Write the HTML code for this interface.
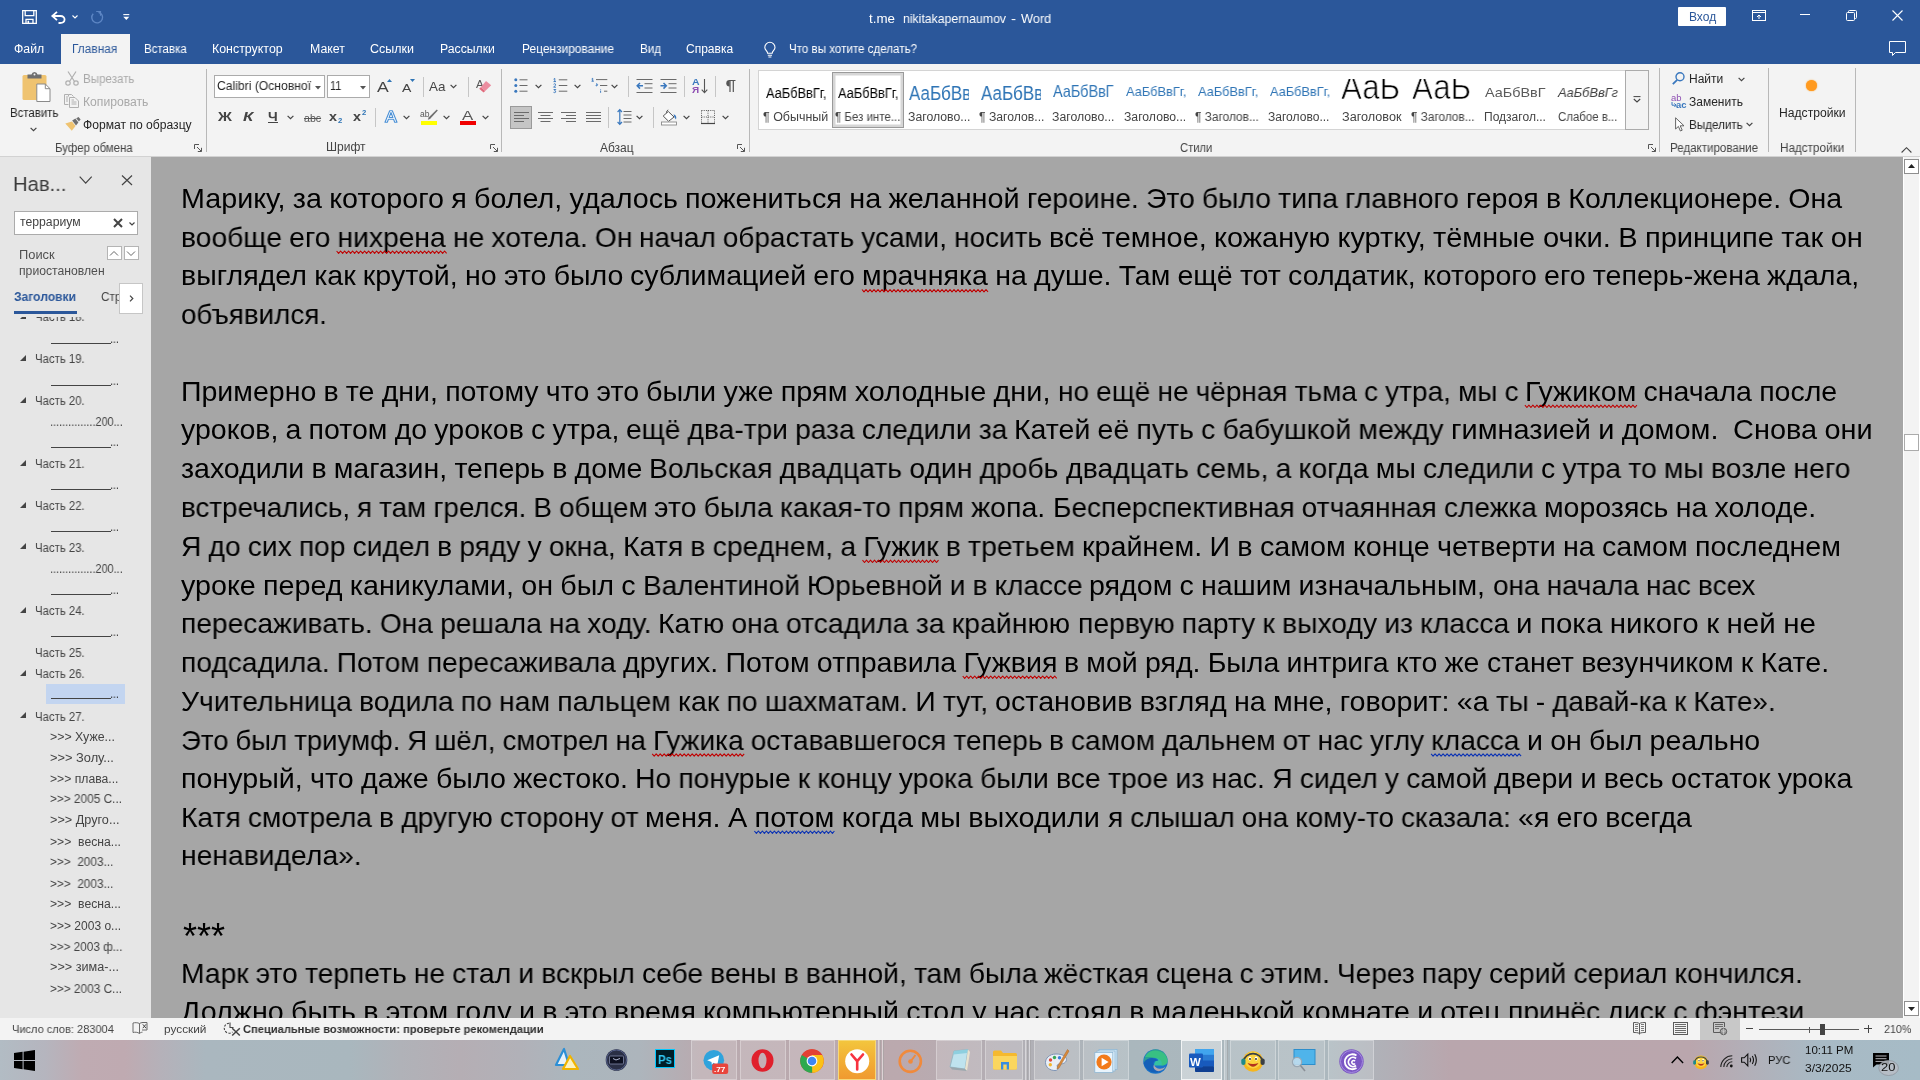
<!DOCTYPE html><html lang="ru"><head><meta charset="utf-8"><title>t.me nikitakapernaumov - Word</title><style>
*{margin:0;padding:0;box-sizing:border-box}
html,body{width:1920px;height:1080px;overflow:hidden;background:#f3f3f3}
body{font-family:"Liberation Sans",sans-serif;position:relative;color:#262626}
.t{position:absolute;white-space:pre;transform-origin:0 0;will-change:transform}
.a{position:absolute}
svg{position:absolute;overflow:visible}
.sep{position:absolute;width:1px;background:#c8c8c8}
.gsep{position:absolute;width:1px;background:#b4b4b4}
</style></head><body><div class="a" style="left:0;top:0;width:1920px;height:64px;background:#2b579a"></div><div class="a" style="left:61px;top:34px;width:69px;height:31px;background:#f3f3f3"></div><div class="a" style="left:0;top:64px;width:1920px;height:92px;background:#f3f3f3"></div><div class="a" style="left:0;top:156px;width:1920px;height:1px;background:#d2d2d2"></div><div class="t " id="t0" style="left:869.09px;top:11.65px;font-size:13px;line-height:13px;color:#ffffff;transform:scaleX(1.0262);">t.me</div><div class="t " id="t1" style="left:902.59px;top:11.65px;font-size:13px;line-height:13px;color:#ffffff;transform:scaleX(0.9444);">nikitakapernaumov</div><div class="t " id="t2" style="left:1010.99px;top:11.65px;font-size:13px;line-height:13px;color:#ffffff;transform:scaleX(1.1649);">-</div><div class="t " id="t3" style="left:1020.99px;top:11.65px;font-size:13px;line-height:13px;color:#ffffff;transform:scaleX(0.9816);">Word</div><div class="a" style="left:1678px;top:7px;width:48px;height:19px;background:#fff;border-radius:1px"></div><div class="t " id="t4" style="left:1688.66px;top:11.49px;font-size:12px;line-height:12px;color:#2b579a;transform:scaleX(0.9920);">Вход</div><div class="t " id="t5" style="left:14.16px;top:43.29px;font-size:12px;line-height:12px;color:#ffffff;transform:scaleX(1.0228);">Файл</div><div class="t " id="t6" style="left:72.16px;top:43.29px;font-size:12px;line-height:12px;color:#2b579a;transform:scaleX(0.9891);">Главная</div><div class="t " id="t7" style="left:143.66px;top:43.29px;font-size:12px;line-height:12px;color:#ffffff;transform:scaleX(0.9570);">Вставка</div><div class="t " id="t8" style="left:212.41px;top:43.29px;font-size:12px;line-height:12px;color:#ffffff;transform:scaleX(1.0331);">Конструктор</div><div class="t " id="t9" style="left:309.66px;top:43.29px;font-size:12px;line-height:12px;color:#ffffff;transform:scaleX(1.0286);">Макет</div><div class="t " id="t10" style="left:370.41px;top:43.29px;font-size:12px;line-height:12px;color:#ffffff;transform:scaleX(1.0400);">Ссылки</div><div class="t " id="t11" style="left:440.36px;top:43.29px;font-size:12px;line-height:12px;color:#ffffff;transform:scaleX(1.0182);">Рассылки</div><div class="t " id="t12" style="left:521.56px;top:43.29px;font-size:12px;line-height:12px;color:#ffffff;transform:scaleX(0.9932);">Рецензирование</div><div class="t " id="t13" style="left:639.56px;top:43.29px;font-size:12px;line-height:12px;color:#ffffff;transform:scaleX(0.9687);">Вид</div><div class="t " id="t14" style="left:686.46px;top:43.29px;font-size:12px;line-height:12px;color:#ffffff;transform:scaleX(0.9992);">Справка</div><div class="t " id="t15" style="left:788.56px;top:43.29px;font-size:12px;line-height:12px;color:#ffffff;transform:scaleX(0.9652);">Что вы хотите сделать?</div><svg style="left:22px;top:10px" width="15" height="14" viewBox="0 0 15 14" fill="none" stroke="#fff" stroke-width="1.3"><path d="M0.7 0.7 H14.3 V13.3 H0.7Z"/><path d="M3.2 0.7 V5.6 H11.8 V0.7"/><path d="M4 13.3 V9.3 H11 V13.3" /><path d="M6.3 10.7 V13" stroke-width="1.6"/></svg><svg style="left:50.5px;top:10.5px" width="15" height="13" viewBox="0 0 15 13" fill="none" stroke="#fff" stroke-width="1.8"><path d="M6 0.8 L1.3 5 L6 9.2"/><path d="M1.5 5 H9.5 C15 5 15 12 9 12 H7.5"/></svg><svg style="left:71.5px;top:14.5px" width="6" height="4" viewBox="0 0 6 4"><path d="M0.5 0.5 L3 3 L5.5 0.5" fill="none" stroke="#fff" stroke-width="1.1"/></svg><svg style="left:90px;top:10.5px" width="14" height="13" viewBox="0 0 14 13" fill="none" stroke="#5d86c4" stroke-width="1.4"><path d="M8.5 1.2 A5.4 5.4 0 1 1 3.2 2.8"/><path d="M6.2 0.5 H10.5 V4.8" stroke-width="1.2"/></svg><svg style="left:122.5px;top:14px" width="7" height="7" viewBox="0 0 7 7"><path d="M0.3 0.6 H6.3" stroke="#fff" stroke-width="1.1"/><path d="M0.3 2.8 H6.3 L3.3 6Z" fill="#fff"/></svg><svg style="left:1752px;top:10px" width="14" height="11" viewBox="0 0 14 11" fill="none" stroke="#fff" stroke-width="1"><rect x="0.5" y="0.5" width="13" height="10"/><path d="M0.5 2.5 H13.5"/><path d="M7 9 V5 M5 7 L7 5 L9 7"/></svg><div class="a" style="left:1800px;top:14px;width:10px;height:1px;background:#fff"></div><svg style="left:1846px;top:10px" width="11" height="11" viewBox="0 0 11 11" fill="none" stroke="#fff" stroke-width="1"><rect x="0.5" y="2.5" width="8" height="8" rx="1"/><path d="M2.5 2.5 V1.5 Q2.5 0.5 3.5 0.5 H9.5 Q10.5 0.5 10.5 1.5 V7.5 Q10.5 8.5 9.5 8.5 H8.5"/></svg><svg style="left:1891.5px;top:9.5px" width="11" height="11" viewBox="0 0 11 11"><path d="M0.5 0.5 L10.5 10.5 M10.5 0.5 L0.5 10.5" stroke="#fff" stroke-width="1.1"/></svg><svg style="left:1889px;top:41px" width="17" height="15" viewBox="0 0 17 15"><path d="M0.5 0.5 H16.5 V11.5 H6.5 L3.5 14.5 V11.5 H0.5Z" fill="none" stroke="#fff" stroke-width="1"/></svg><svg style="left:764px;top:41.5px" width="12" height="16" viewBox="0 0 12 16" fill="none" stroke="#fff" stroke-width="1.1"><path d="M3.6 11.3 C3.6 9 0.8 8.2 0.8 5.4 A5.1 5.1 0 0 1 11 5.4 C11 8.2 8.2 9 8.2 11.3Z"/><path d="M3.8 13.2 H8 M4.4 15 H7.4"/></svg><svg style="left:21.5px;top:72px" width="29" height="30" viewBox="0 0 29 30"><rect x="0.5" y="3" width="24" height="25" rx="1.5" fill="#efc370"/><path d="M5.5 2.5 H9.5 Q10 0 12.5 0 Q15 0 15.5 2.5 H19.5 V6.5 H5.5Z" fill="#6f6f6f"/><circle cx="12.5" cy="2.4" r="1" fill="#f3f3f3"/><path d="M14.8 12 H23.3 L28 16.7 V29.5 H14.8Z" fill="#fff" stroke="#8a8a8a" stroke-width="1"/><path d="M23.3 12 V16.7 H28" fill="none" stroke="#8a8a8a" stroke-width="1"/></svg><div class="t " id="t16" style="left:9.56px;top:107.29px;font-size:12px;line-height:12px;color:#262626;transform:scaleX(0.9521);">Вставить</div><svg style="left:29.8px;top:126.5px" width="7" height="5" viewBox="0 0 7 5"><path d="M0.6 0.8 L3.5 3.7 L6.4 0.8" fill="none" stroke="#444" stroke-width="1.2"/></svg><svg style="left:65px;top:70.5px" width="14" height="15" viewBox="0 0 14 15" fill="none" stroke="#b0b0b0" stroke-width="1.2"><path d="M3 0.5 L9.5 10.5 M11 0.5 L4.5 10.5"/><circle cx="3" cy="12" r="2.2"/><circle cx="11" cy="12" r="2.2"/></svg><div class="t " id="t17" style="left:82.86px;top:72.89px;font-size:12px;line-height:12px;color:#a9a9a9;transform:scaleX(0.9637);">Вырезать</div><svg style="left:64px;top:94px" width="15" height="14" viewBox="0 0 15 14" fill="none" stroke="#b0b0b0" stroke-width="1"><path d="M4.5 2.5 V0.5 H7.5 L9.5 2.5"/><path d="M0.5 0.5 H4.5 M0.5 0.5 V10.5 H4.5"/><path d="M5.5 3.5 H11 L14.5 7 V13.5 H5.5Z"/><path d="M2 3 H4 M2 5 H4 M2 7 H4 M7.5 8 H12.5 M7.5 10 H12.5 M7.5 6 H10"/></svg><div class="t " id="t18" style="left:82.86px;top:96.29px;font-size:12px;line-height:12px;color:#a9a9a9;transform:scaleX(1.0126);">Копировать</div><svg style="left:64.5px;top:117px" width="16" height="14" viewBox="0 0 16 14"><path d="M0.3 6.5 L7 4.5 L10.5 9 L6.8 13.7Z" fill="#efc370"/><path d="M7.2 3.6 L10.4 1.6 L13.4 5.6 L11 8.5Z" fill="#6f6f6f"/><path d="M11.2 1.2 L13.6 0 L15.6 2.6 L13.9 4.6Z" fill="#6f6f6f"/></svg><div class="t " id="t19" style="left:82.86px;top:118.79px;font-size:12px;line-height:12px;color:#262626;transform:scaleX(1.0096);">Формат по образцу</div><div class="t " id="t20" style="left:55.46px;top:141.79px;font-size:12px;line-height:12px;color:#444444;transform:scaleX(0.9533);">Буфер обмена</div><svg style="left:193.6px;top:144.0px" width="8" height="8" viewBox="0 0 8 8" fill="none" stroke="#555" stroke-width="1"><path d="M0.5 5 V0.5 H5"/><path d="M3 3 L7.3 7.3 M7.5 3.8 V7.5 H3.8"/></svg><div class="a" style="left:205.5px;top:68.5px;width:1px;height:83.0px;background:#b8b8b8"></div><div class="a" style="left:214px;top:75px;width:111px;height:23px;background:#fff;border:1px solid #ababab"></div><div class="t " id="t21" style="left:216.62px;top:80.47px;font-size:12.5px;line-height:12.5px;color:#262626;transform:scaleX(0.9705);">Calibri (Основної</div><svg style="left:315px;top:85.5px" width="6" height="3.5" viewBox="0 0 6 3.5"><path d="M0 0 H6 L3 3.5Z" fill="#555"/></svg><div class="a" style="left:327px;top:75px;width:43px;height:23px;background:#fff;border:1px solid #ababab"></div><div class="t " id="t22" style="left:329.93px;top:80.47px;font-size:12.5px;line-height:12.5px;color:#262626;transform:scaleX(0.8703);">11</div><svg style="left:359.5px;top:85.5px" width="6" height="3.5" viewBox="0 0 6 3.5"><path d="M0 0 H6 L3 3.5Z" fill="#555"/></svg><div class="t " id="t23" style="left:377.19px;top:80.18px;font-size:14.5px;line-height:14.5px;color:#444;transform:scaleX(1.2138);">A</div><svg style="left:387px;top:79px" width="5" height="3" viewBox="0 0 5 3"><path d="M0 3 L2.5 0 L5 3Z" fill="#2e74b5"/></svg><div class="t " id="t24" style="left:402.19px;top:82.72px;font-size:11.5px;line-height:11.5px;color:#444;transform:scaleX(1.2226);">A</div><svg style="left:410px;top:79px" width="5" height="3" viewBox="0 0 5 3"><path d="M0 0 L2.5 3 L5 0Z" fill="#2e74b5"/></svg><div class="a" style="left:422.5px;top:76.5px;width:1px;height:20.5px;background:#c6c6c6"></div><div class="t " id="t25" style="left:429.09px;top:79.95px;font-size:13px;line-height:13px;color:#444;transform:scaleX(1.0285);">Aa</div><svg style="left:449.9px;top:84.3px" width="7" height="5" viewBox="0 0 7 5"><path d="M0.6 0.8 L3.5 3.7 L6.4 0.8" fill="none" stroke="#444" stroke-width="1.2"/></svg><div class="a" style="left:467.5px;top:76.5px;width:1px;height:20.5px;background:#c6c6c6"></div><div class="t " id="t26" style="left:475.80px;top:79.98px;font-size:10px;line-height:10px;color:#555;transform:scaleX(1.1541);">A</div><svg style="left:478px;top:80px" width="14" height="13" viewBox="0 0 14 13"><path d="M8 1 L13.2 5.2 L7.2 11 L2.8 7.2Z" fill="#ec8ea0"/><path d="M2.8 7.2 L7.2 11 L5.6 12.6 L1.2 8.8Z" fill="#e06a7c"/></svg><div class="t " id="t27" style="left:217.93px;top:111.07px;font-size:12.5px;line-height:12.5px;color:#444;font-weight:700;transform:scaleX(1.2287);">Ж</div><div class="t " id="t28" style="left:242.93px;top:111.07px;font-size:12.5px;line-height:12.5px;color:#444;font-weight:700;font-style:italic;transform:scaleX(1.3398);">К</div><div class="t " id="t29" style="left:267.93px;top:111.07px;font-size:12.5px;line-height:12.5px;color:#444;font-weight:700;transform:scaleX(1.1027);">Ч</div><div class="a" style="left:268px;top:122.3px;width:10px;height:1px;background:#444"></div><svg style="left:286.5px;top:115.3px" width="7" height="5" viewBox="0 0 7 5"><path d="M0.6 0.8 L3.5 3.7 L6.4 0.8" fill="none" stroke="#444" stroke-width="1.2"/></svg><div class="t " id="t30" style="left:303.76px;top:112.56px;font-size:10.5px;line-height:10.5px;color:#555;transform:scaleX(1.0072);text-decoration:line-through;">abc</div><div class="t " id="t31" style="left:329.12px;top:111.07px;font-size:12.5px;line-height:12.5px;color:#444;font-weight:700;transform:scaleX(1.1506);">x</div><div class="t " id="t32" style="left:338.05px;top:118.45px;font-size:6.5px;line-height:6.5px;color:#2e74b5;font-weight:700;transform:scaleX(1.1807);">2</div><div class="t " id="t33" style="left:352.52px;top:111.07px;font-size:12.5px;line-height:12.5px;color:#444;font-weight:700;transform:scaleX(1.1506);">x</div><div class="t " id="t34" style="left:361.55px;top:109.95px;font-size:6.5px;line-height:6.5px;color:#2e74b5;font-weight:700;transform:scaleX(1.1807);">2</div><div class="a" style="left:375.3px;top:107.8px;width:1px;height:19.5px;background:#c6c6c6"></div><svg style="left:384px;top:110px" width="14" height="13" viewBox="0 0 14 13"><path d="M1 12.3 L5.7 0.7 H8.3 L13 12.3 H10.7 L9.6 9.3 H4.4 L3.3 12.3Z M5.1 7.5 H8.9 L7 2.5Z" fill="#fff" stroke="#4a90d6" stroke-width="1.1" stroke-linejoin="round"/></svg><svg style="left:403.0px;top:115.3px" width="7" height="5" viewBox="0 0 7 5"><path d="M0.6 0.8 L3.5 3.7 L6.4 0.8" fill="none" stroke="#444" stroke-width="1.2"/></svg><div class="t " id="t35" style="left:420.40px;top:109.75px;font-size:8.5px;line-height:8.5px;color:#555;transform:scaleX(1.0054);">ab</div><svg style="left:426px;top:109px" width="12" height="12" viewBox="0 0 12 12"><path d="M10.8 0.6 L11.8 1.6 L4 10 L1.8 10.8 L2.6 8.6Z" fill="#6f6f6f"/></svg><div class="a" style="left:421px;top:121px;width:16px;height:4px;background:#ffff00"></div><svg style="left:442.9px;top:115.3px" width="7" height="5" viewBox="0 0 7 5"><path d="M0.6 0.8 L3.5 3.7 L6.4 0.8" fill="none" stroke="#444" stroke-width="1.2"/></svg><div class="t " id="t36" style="left:462.25px;top:109.32px;font-size:13.5px;line-height:13.5px;color:#555;transform:scaleX(1.2445);">A</div><div class="a" style="left:460px;top:121px;width:16px;height:4px;background:#f00000"></div><svg style="left:482.0px;top:115.3px" width="7" height="5" viewBox="0 0 7 5"><path d="M0.6 0.8 L3.5 3.7 L6.4 0.8" fill="none" stroke="#444" stroke-width="1.2"/></svg><div class="t " id="t37" style="left:326.06px;top:141.09px;font-size:12px;line-height:12px;color:#444444;transform:scaleX(1.0014);">Шрифт</div><svg style="left:490.0px;top:144.0px" width="8" height="8" viewBox="0 0 8 8" fill="none" stroke="#555" stroke-width="1"><path d="M0.5 5 V0.5 H5"/><path d="M3 3 L7.3 7.3 M7.5 3.8 V7.5 H3.8"/></svg><div class="a" style="left:501.4px;top:68.5px;width:1px;height:83.0px;background:#b8b8b8"></div><svg style="left:513.5px;top:78px" width="14" height="15" viewBox="0 0 14 15"><circle cx="1.8" cy="1.8" r="1.5" fill="#3a78be"/><circle cx="1.8" cy="7.5" r="1.5" fill="#3a78be"/><circle cx="1.8" cy="13.2" r="1.5" fill="#3a78be"/><path d="M5.5 1.8 H13.5 M5.5 7.5 H13.5 M5.5 13.2 H13.5" stroke="#6a6a6a" stroke-width="1"/></svg><svg style="left:534.8px;top:83.8px" width="7" height="5" viewBox="0 0 7 5"><path d="M0.6 0.8 L3.5 3.7 L6.4 0.8" fill="none" stroke="#444" stroke-width="1.2"/></svg><svg style="left:552.5px;top:78px" width="15" height="15" viewBox="0 0 15 15"><path d="M5.8 1.8 H14.3 M5.8 7.5 H14.3 M5.8 13.2 H14.3" stroke="#6a6a6a" stroke-width="1"/><path d="M0.6 1.2 L1.8 0.4 V3.6 M0.5 3.6 H3 M0.6 6.3 Q1.8 5.2 2.6 6.2 Q3 7.2 0.6 9.2 H3 M0.6 11.5 H2.8 L1.6 12.8 Q3.2 13 2.6 14.2 Q1.8 15 0.5 14.3" fill="none" stroke="#3a78be" stroke-width="0.95"/></svg><svg style="left:574.0px;top:83.8px" width="7" height="5" viewBox="0 0 7 5"><path d="M0.6 0.8 L3.5 3.7 L6.4 0.8" fill="none" stroke="#444" stroke-width="1.2"/></svg><svg style="left:590.5px;top:78px" width="17" height="15" viewBox="0 0 17 15"><path d="M5 1.6 H16.3 M9 7.5 H16.3 M13 13.2 H16.3" stroke="#6a6a6a" stroke-width="1"/><path d="M0.6 1 L1.7 0.3 V3.2 M0.5 3.2 H2.8 M5 6 Q6.4 5.4 6.6 6.6 Q6.6 7.8 5.2 8 Q4.6 7 5.8 6.6 M9.6 11 V11.6 M9.6 12.6 V14.8" fill="none" stroke="#3a78be" stroke-width="0.95"/></svg><svg style="left:610.9px;top:83.8px" width="7" height="5" viewBox="0 0 7 5"><path d="M0.6 0.8 L3.5 3.7 L6.4 0.8" fill="none" stroke="#444" stroke-width="1.2"/></svg><div class="a" style="left:628.4px;top:76.0px;width:1px;height:20.5px;background:#c6c6c6"></div><svg style="left:635.5px;top:78.5px" width="17" height="14" viewBox="0 0 17 14"><path d="M0.5 0.5 H16.5 M8.5 4.7 H16.5 M8.5 9 H16.5 M0.5 13.5 H16.5" stroke="#6a6a6a" stroke-width="1"/><path d="M7 6.8 H1.5 M4 4 L1.2 6.8 L4 9.6" fill="none" stroke="#3a78be" stroke-width="1.5"/></svg><svg style="left:659.5px;top:78.5px" width="17" height="14" viewBox="0 0 17 14"><path d="M0.5 0.5 H16.5 M8.5 4.7 H16.5 M8.5 9 H16.5 M0.5 13.5 H16.5" stroke="#6a6a6a" stroke-width="1"/><path d="M0.5 6.8 H6 M3.5 4 L6.3 6.8 L3.5 9.6" fill="none" stroke="#3a78be" stroke-width="1.5"/></svg><div class="a" style="left:683.5px;top:76.0px;width:1px;height:20.5px;background:#c6c6c6"></div><div class="t " id="t38" style="left:692.34px;top:77.41px;font-size:9.5px;line-height:9.5px;color:#3a78be;font-weight:700;transform:scaleX(1.1113);">A</div><div class="t " id="t39" style="left:692.34px;top:85.41px;font-size:9.5px;line-height:9.5px;color:#8e4fb3;font-weight:700;transform:scaleX(1.0457);">Я</div><svg style="left:700.5px;top:78.5px" width="7" height="15" viewBox="0 0 7 15"><path d="M3.5 0 V13.5 M0.7 10.7 L3.5 13.7 L6.3 10.7" fill="none" stroke="#555" stroke-width="1.1"/></svg><div class="a" style="left:714.6px;top:76.0px;width:1px;height:20.5px;background:#c6c6c6"></div><svg style="left:724.5px;top:80px" width="11" height="12" viewBox="0 0 11 12"><path d="M4.6 0 A3.3 3.3 0 0 0 4.6 6.6 Z" fill="#555"/><path d="M4 0.5 H10.5 M5 0.5 V12 M8.3 0.5 V12" stroke="#555" stroke-width="1.2" fill="none"/></svg><div class="a" style="left:510px;top:106px;width:22px;height:23px;background:#c5c5c5;border:1px solid #9a9a9a"></div><svg style="left:513.5px;top:112.0px" width="15" height="11" viewBox="0 0 15 11"><path d="M0.0 0.5 H15.0 M0.0 3.5 H10.0 M0.0 6.5 H15.0 M0.0 9.5 H10.0" stroke="#6a6a6a" stroke-width="1"/></svg><svg style="left:537.7px;top:112.0px" width="15" height="11" viewBox="0 0 15 11"><path d="M0.0 0.5 H15.0 M2.5 3.5 H12.5 M0.0 6.5 H15.0 M2.5 9.5 H12.5" stroke="#6a6a6a" stroke-width="1"/></svg><svg style="left:561.3px;top:112.0px" width="15" height="11" viewBox="0 0 15 11"><path d="M0.0 0.5 H15.0 M5.0 3.5 H15.0 M0.0 6.5 H15.0 M5.0 9.5 H15.0" stroke="#6a6a6a" stroke-width="1"/></svg><svg style="left:585.5px;top:112.0px" width="15" height="11" viewBox="0 0 15 11"><path d="M0.0 0.5 H15.0 M0.0 3.5 H15.0 M0.0 6.5 H15.0 M0.0 9.5 H15.0" stroke="#6a6a6a" stroke-width="1"/></svg><div class="a" style="left:608.3px;top:107.0px;width:1px;height:20.6px;background:#c6c6c6"></div><svg style="left:616.5px;top:109px" width="15" height="16" viewBox="0 0 15 16"><path d="M6.5 2.5 H14.5 M6.5 6 H14.5 M6.5 9.5 H14.5 M6.5 13 H14.5" stroke="#6a6a6a" stroke-width="1"/><path d="M2.8 0.8 V15.2 M0.6 3 L2.8 0.7 L5 3 M0.6 13 L2.8 15.3 L5 13" fill="none" stroke="#3a78be" stroke-width="1.2"/></svg><svg style="left:636.0px;top:115.3px" width="7" height="5" viewBox="0 0 7 5"><path d="M0.6 0.8 L3.5 3.7 L6.4 0.8" fill="none" stroke="#444" stroke-width="1.2"/></svg><div class="a" style="left:653.4px;top:107.0px;width:1px;height:20.6px;background:#c6c6c6"></div><svg style="left:661px;top:108.5px" width="17" height="17" viewBox="0 0 17 17"><path d="M7.2 0.8 Q5.2 1.5 5.6 4.5" fill="none" stroke="#555" stroke-width="1"/><path d="M7.3 2.5 L13 8 L7.6 12.3 L2.2 7Z" fill="#fff" stroke="#555" stroke-width="1"/><path d="M12.5 5.2 Q16.2 6 15 10.4 Q13.3 8.6 13.2 7.5Z" fill="#3a78be"/><rect x="0.5" y="13" width="15" height="3" fill="#fff" stroke="#8a8a8a" stroke-width="0.9"/></svg><svg style="left:683.1px;top:115.3px" width="7" height="5" viewBox="0 0 7 5"><path d="M0.6 0.8 L3.5 3.7 L6.4 0.8" fill="none" stroke="#444" stroke-width="1.2"/></svg><svg style="left:700.5px;top:110px" width="14" height="14" viewBox="0 0 14 14" fill="none" stroke="#555" stroke-width="1"><path d="M0.5 0.5 H13.5 M0.5 0.5 V13.5 M13.5 0.5 V13.5 M7 0.5 V13.5 M0.5 7 H13.5" stroke-dasharray="1 1.2"/><path d="M0 13.5 H14" stroke="#444" stroke-width="1.2"/></svg><svg style="left:722.0px;top:115.3px" width="7" height="5" viewBox="0 0 7 5"><path d="M0.6 0.8 L3.5 3.7 L6.4 0.8" fill="none" stroke="#444" stroke-width="1.2"/></svg><div class="t " id="t40" style="left:600.46px;top:141.59px;font-size:12px;line-height:12px;color:#444444;transform:scaleX(0.9961);">Абзац</div><svg style="left:737.0px;top:144.0px" width="8" height="8" viewBox="0 0 8 8" fill="none" stroke="#555" stroke-width="1"><path d="M0.5 5 V0.5 H5"/><path d="M3 3 L7.3 7.3 M7.5 3.8 V7.5 H3.8"/></svg><div class="a" style="left:748.5px;top:68.5px;width:1px;height:83.0px;background:#b8b8b8"></div><div class="a" style="left:758px;top:70px;width:868px;height:60px;background:#fff;border:1px solid #d4d4d4"></div><div class="a" style="left:832px;top:72px;width:72px;height:56px;background:#fff;border:1px solid #9a9a9a;box-shadow:inset 0 0 0 2.5px #d6d6d6"></div><div class="t " id="t41" style="left:765.82px;top:85.80px;font-size:14px;line-height:14px;color:#000;transform:scaleX(0.9144);">АаБбВвГг,</div><div class="t " id="t42" style="left:837.82px;top:85.80px;font-size:14px;line-height:14px;color:#000;transform:scaleX(0.9144);">АаБбВвГг,</div><div class="a" style="left:905px;top:74px;width:64.2px;height:50px;overflow:hidden"><div class="t " id="t43" style="left:4.30px;top:8.72px;font-size:20px;line-height:20px;color:#2e74b5;transform:scaleX(0.8494);">АаБбВвГ</div></div><div class="a" style="left:977px;top:74px;width:64.2px;height:50px;overflow:hidden"><div class="t " id="t44" style="left:4.30px;top:8.72px;font-size:20px;line-height:20px;color:#2e74b5;transform:scaleX(0.8494);">АаБбВвГ</div></div><div class="t " id="t45" style="left:1053.27px;top:83.44px;font-size:16.2px;line-height:16.2px;color:#2e74b5;transform:scaleX(0.8897);">АаБбВвГ</div><div class="t " id="t46" style="left:1125.86px;top:85.42px;font-size:13.5px;line-height:13.5px;color:#2e74b5;transform:scaleX(0.9473);">АаБбВвГг,</div><div class="t " id="t47" style="left:1197.76px;top:85.42px;font-size:13.5px;line-height:13.5px;color:#2e74b5;transform:scaleX(0.9457);">АаБбВвГг,</div><div class="t " id="t48" style="left:1269.76px;top:85.42px;font-size:13.5px;line-height:13.5px;color:#2e74b5;transform:scaleX(0.9442);">АаБбВвГг,</div><div class="a" style="left:1337px;top:78.6px;width:71px;height:28px;overflow:hidden"><div class="t " id="t49" style="left:3.58px;top:-8.15px;font-size:34.5px;line-height:34.5px;color:#000;transform:scaleX(0.9066);-webkit-text-stroke:0.7px #fff;">АаБ</div></div><div class="a" style="left:1409px;top:78.6px;width:71px;height:28px;overflow:hidden"><div class="t " id="t50" style="left:3.38px;top:-8.15px;font-size:34.5px;line-height:34.5px;color:#000;transform:scaleX(0.9066);-webkit-text-stroke:0.7px #fff;">АаБ</div></div><div class="t " id="t51" style="left:1485.49px;top:86.25px;font-size:13px;line-height:13px;color:#5a5a5a;transform:scaleX(1.1083);">АаБбВвГ</div><div class="t " id="t52" style="left:1557.65px;top:85.82px;font-size:13.5px;line-height:13.5px;color:#404040;font-style:italic;transform:scaleX(0.9534);">АаБбВвГг</div><div class="t " id="t53" style="left:762.96px;top:111.29px;font-size:12px;line-height:12px;color:#444;transform:scaleX(1.0384);">¶ Обычный</div><div class="t " id="t54" style="left:834.66px;top:111.29px;font-size:12px;line-height:12px;color:#444;transform:scaleX(0.9584);">¶ Без инте...</div><div class="t " id="t55" style="left:908.16px;top:111.29px;font-size:12px;line-height:12px;color:#444;transform:scaleX(1.0207);">Заголово...</div><div class="t " id="t56" style="left:979.16px;top:111.29px;font-size:12px;line-height:12px;color:#444;transform:scaleX(1.0158);">¶ Заголов...</div><div class="t " id="t57" style="left:1052.16px;top:111.29px;font-size:12px;line-height:12px;color:#444;transform:scaleX(1.0207);">Заголово...</div><div class="t " id="t58" style="left:1123.96px;top:111.29px;font-size:12px;line-height:12px;color:#444;transform:scaleX(1.0175);">Заголово...</div><div class="t " id="t59" style="left:1195.16px;top:111.29px;font-size:12px;line-height:12px;color:#444;transform:scaleX(0.9910);">¶ Заголов...</div><div class="t " id="t60" style="left:1268.16px;top:111.29px;font-size:12px;line-height:12px;color:#444;transform:scaleX(1.0044);">Заголово...</div><div class="t " id="t61" style="left:1342.16px;top:111.29px;font-size:12px;line-height:12px;color:#444;transform:scaleX(1.0535);">Заголовок</div><div class="t " id="t62" style="left:1410.96px;top:111.29px;font-size:12px;line-height:12px;color:#444;transform:scaleX(0.9879);">¶ Заголов...</div><div class="t " id="t63" style="left:1484.16px;top:111.29px;font-size:12px;line-height:12px;color:#444;transform:scaleX(1.0031);">Подзагол...</div><div class="t " id="t64" style="left:1557.76px;top:111.29px;font-size:12px;line-height:12px;color:#444;transform:scaleX(0.9528);">Слабое в...</div><div class="a" style="left:1625px;top:70px;width:24px;height:60px;background:#f3f3f3;border:1px solid #ababab"></div><svg style="left:1633px;top:95.5px" width="8" height="7" viewBox="0 0 8 7"><path d="M0.5 0.6 H7.5" stroke="#444" stroke-width="1"/><path d="M0.8 3 L4 6 L7.2 3" fill="none" stroke="#444" stroke-width="1.1"/></svg><div class="t " id="t65" style="left:1179.76px;top:141.79px;font-size:12px;line-height:12px;color:#444444;transform:scaleX(0.9353);">Стили</div><svg style="left:1648.0px;top:144.0px" width="8" height="8" viewBox="0 0 8 8" fill="none" stroke="#555" stroke-width="1"><path d="M0.5 5 V0.5 H5"/><path d="M3 3 L7.3 7.3 M7.5 3.8 V7.5 H3.8"/></svg><div class="a" style="left:1659.4px;top:67.5px;width:1px;height:84.5px;background:#b8b8b8"></div><svg style="left:1672px;top:72px" width="13" height="13" viewBox="0 0 13 13" fill="none"><circle cx="8" cy="4.8" r="4" stroke="#3a78be" stroke-width="1.4"/><path d="M5.2 7.8 L0.8 12.2" stroke="#3a78be" stroke-width="1.8"/></svg><div class="t " id="t66" style="left:1689.46px;top:73.09px;font-size:12px;line-height:12px;color:#262626;transform:scaleX(0.9968);">Найти</div><svg style="left:1738.4px;top:77.3px" width="7" height="5" viewBox="0 0 7 5"><path d="M0.6 0.8 L3.5 3.7 L6.4 0.8" fill="none" stroke="#444" stroke-width="1.2"/></svg><div class="t " id="t67" style="left:1670.90px;top:93.75px;font-size:8.5px;line-height:8.5px;color:#8e4fb3;transform:scaleX(1.1110);">ab</div><div class="t " id="t68" style="left:1676.40px;top:101.05px;font-size:8.5px;line-height:8.5px;color:#3a78be;font-weight:700;transform:scaleX(1.1110);">ac</div><svg style="left:1670.5px;top:102px" width="6" height="6" viewBox="0 0 6 6"><path d="M1 0 V3.2 H5 M3.4 1.4 L5.2 3.2 L3.4 5" fill="none" stroke="#3a78be" stroke-width="1"/></svg><div class="t " id="t69" style="left:1689.46px;top:96.49px;font-size:12px;line-height:12px;color:#262626;transform:scaleX(0.9963);">Заменить</div><svg style="left:1675px;top:116.5px" width="10" height="15" viewBox="0 0 10 15"><path d="M0.6 0.8 V12 L3.4 9.4 L5.4 14 L7.2 13.2 L5.2 8.8 H9Z" fill="#fff" stroke="#555" stroke-width="0.9" stroke-linejoin="round"/></svg><div class="t " id="t70" style="left:1689.46px;top:118.69px;font-size:12px;line-height:12px;color:#262626;transform:scaleX(0.9707);">Выделить</div><svg style="left:1745.9px;top:122.3px" width="7" height="5" viewBox="0 0 7 5"><path d="M0.6 0.8 L3.5 3.7 L6.4 0.8" fill="none" stroke="#444" stroke-width="1.2"/></svg><div class="t " id="t71" style="left:1669.56px;top:141.69px;font-size:12px;line-height:12px;color:#444444;transform:scaleX(0.9630);">Редактирование</div><div class="a" style="left:1768.3px;top:67.5px;width:1px;height:84.5px;background:#b8b8b8"></div><div class="a" style="left:1805.5px;top:79.5px;width:11px;height:11px;border-radius:50%;background:#ff9a1f;box-shadow:0 0 1.5px #ff9a1f"></div><div class="t " id="t72" style="left:1778.56px;top:106.99px;font-size:12px;line-height:12px;color:#262626;transform:scaleX(1.0106);">Надстройки</div><div class="t " id="t73" style="left:1779.66px;top:141.69px;font-size:12px;line-height:12px;color:#444444;transform:scaleX(0.9756);">Надстройки</div><div class="a" style="left:1855.0px;top:67.5px;width:1px;height:84.5px;background:#b8b8b8"></div><svg style="left:1901px;top:146.5px" width="11" height="6" viewBox="0 0 11 6"><path d="M0.6 5.5 L5.5 0.7 L10.4 5.5" fill="none" stroke="#444" stroke-width="1.1"/></svg><div class="a" style="left:0;top:157px;width:151px;height:861px;background:#e6e6e6"></div><div class="t " id="t74" style="left:13.06px;top:173.60px;font-size:20.5px;line-height:20.5px;color:#3b3b3b;transform:scaleX(0.9866);">Нав...</div><svg style="left:79px;top:176px" width="14" height="9" viewBox="0 0 14 9"><path d="M0.7 0.7 L6.7 7.2 L12.7 0.7" fill="none" stroke="#444" stroke-width="1.2"/></svg><svg style="left:121px;top:175px" width="12" height="11" viewBox="0 0 12 11"><path d="M1 0.5 L11 10 M11 0.5 L1 10" fill="none" stroke="#444" stroke-width="1.2"/></svg><div class="a" style="left:14px;top:211px;width:124px;height:24px;background:#fff;border:1px solid #ababab"></div><div class="t " id="t75" style="left:20.46px;top:216.49px;font-size:12px;line-height:12px;color:#444;transform:scaleX(1.0181);">террариум</div><svg style="left:113px;top:218px" width="10" height="10" viewBox="0 0 10 10"><path d="M1 1 L9 9 M9 1 L1 9" fill="none" stroke="#444" stroke-width="2"/></svg><svg style="left:129px;top:221.5px" width="6" height="4" viewBox="0 0 6 4"><path d="M0.5 0.5 L3 3 L5.5 0.5" fill="none" stroke="#444" stroke-width="1.2"/></svg><div class="t " id="t76" style="left:18.66px;top:249.49px;font-size:12px;line-height:12px;color:#505050;transform:scaleX(1.0714);">Поиск</div><div class="t " id="t77" style="left:18.66px;top:265.29px;font-size:12px;line-height:12px;color:#505050;transform:scaleX(1.0159);">приостановлен</div><div class="a" style="left:107px;top:246px;width:15px;height:14px;background:#fff;border:1px solid #b4b4b4"></div><svg style="left:109px;top:249.5px" width="10" height="7" viewBox="0 0 10 7"><path d="M1 5.5 L5 1.5 L9 5.5" fill="none" stroke="#666" stroke-width="1"/></svg><div class="a" style="left:124px;top:246px;width:15px;height:14px;background:#fff;border:1px solid #b4b4b4"></div><svg style="left:126px;top:249.5px" width="10" height="7" viewBox="0 0 10 7"><path d="M1 1.5 L5 5.5 L9 1.5" fill="none" stroke="#666" stroke-width="1"/></svg><div class="t " id="t78" style="left:14.12px;top:291.07px;font-size:12.5px;line-height:12.5px;color:#2b579a;font-weight:700;transform:scaleX(0.9659);">Заголовки</div><div class="a" style="left:14px;top:311px;width:63px;height:3px;background:#2b579a"></div><div class="t " id="t79" style="left:101.12px;top:291.07px;font-size:12.5px;line-height:12.5px;color:#444;transform:scaleX(0.9439);">Стр</div><div class="a" style="left:119px;top:283px;width:24px;height:31px;background:#fff;border:1px solid #c6c6c6"></div><svg style="left:128.5px;top:294.5px" width="5" height="7" viewBox="0 0 5 7"><path d="M1 0.7 L3.8 3.5 L1 6.3" fill="none" stroke="#444" stroke-width="1.2"/></svg><div class="a" style="left:0;top:317px;width:150px;height:701px;overflow:hidden"><div class="t " id="t80" style="left:34.66px;top:-5.71px;font-size:12px;line-height:12px;color:#444;transform:scaleX(0.9467);">Часть 18.</div><svg style="left:19.5px;top:-4.5px" width="6" height="6" viewBox="0 0 6 6"><path d="M6 0 L6 6 L0 6Z" fill="#444"/></svg><div class="a" style="left:51.2px;top:25.8px;width:59.5px;height:1px;background:#444"></div><div class="t " id="t81" style="left:110.36px;top:15.59px;font-size:12px;line-height:12px;color:#333;transform:scaleX(0.8926);">...</div><div class="t " id="t82" style="left:34.66px;top:36.29px;font-size:12px;line-height:12px;color:#444;transform:scaleX(0.9467);">Часть 19.</div><svg style="left:19.5px;top:37.5px" width="6" height="6" viewBox="0 0 6 6"><path d="M6 0 L6 6 L0 6Z" fill="#444"/></svg><div class="a" style="left:51.2px;top:67.8px;width:59.5px;height:1px;background:#444"></div><div class="t " id="t83" style="left:110.36px;top:57.59px;font-size:12px;line-height:12px;color:#333;transform:scaleX(0.8926);">...</div><div class="t " id="t84" style="left:34.66px;top:78.29px;font-size:12px;line-height:12px;color:#444;transform:scaleX(0.9467);">Часть 20.</div><svg style="left:19.5px;top:79.5px" width="6" height="6" viewBox="0 0 6 6"><path d="M6 0 L6 6 L0 6Z" fill="#444"/></svg><div class="t " id="t85" style="left:50.36px;top:98.79px;font-size:12px;line-height:12px;color:#444;transform:scaleX(0.9087);">...............200...</div><div class="a" style="left:51.2px;top:129.5px;width:59.5px;height:1px;background:#444"></div><div class="t " id="t86" style="left:110.36px;top:119.29px;font-size:12px;line-height:12px;color:#333;transform:scaleX(0.8926);">...</div><div class="t " id="t87" style="left:34.66px;top:141.29px;font-size:12px;line-height:12px;color:#444;transform:scaleX(0.9467);">Часть 21.</div><svg style="left:19.5px;top:142.5px" width="6" height="6" viewBox="0 0 6 6"><path d="M6 0 L6 6 L0 6Z" fill="#444"/></svg><div class="a" style="left:51.2px;top:172.0px;width:59.5px;height:1px;background:#444"></div><div class="t " id="t88" style="left:110.36px;top:161.79px;font-size:12px;line-height:12px;color:#333;transform:scaleX(0.8926);">...</div><div class="t " id="t89" style="left:34.66px;top:183.29px;font-size:12px;line-height:12px;color:#444;transform:scaleX(0.9467);">Часть 22.</div><svg style="left:19.5px;top:184.5px" width="6" height="6" viewBox="0 0 6 6"><path d="M6 0 L6 6 L0 6Z" fill="#444"/></svg><div class="a" style="left:51.2px;top:213.8px;width:59.5px;height:1px;background:#444"></div><div class="t " id="t90" style="left:110.36px;top:203.59px;font-size:12px;line-height:12px;color:#333;transform:scaleX(0.8926);">...</div><div class="t " id="t91" style="left:34.66px;top:225.09px;font-size:12px;line-height:12px;color:#444;transform:scaleX(0.9467);">Часть 23.</div><svg style="left:19.5px;top:226.3px" width="6" height="6" viewBox="0 0 6 6"><path d="M6 0 L6 6 L0 6Z" fill="#444"/></svg><div class="t " id="t92" style="left:50.36px;top:246.29px;font-size:12px;line-height:12px;color:#444;transform:scaleX(0.9087);">...............200...</div><div class="a" style="left:51.2px;top:277.0px;width:59.5px;height:1px;background:#444"></div><div class="t " id="t93" style="left:110.36px;top:266.79px;font-size:12px;line-height:12px;color:#333;transform:scaleX(0.8926);">...</div><div class="t " id="t94" style="left:34.66px;top:288.29px;font-size:12px;line-height:12px;color:#444;transform:scaleX(0.9467);">Часть 24.</div><svg style="left:19.5px;top:289.5px" width="6" height="6" viewBox="0 0 6 6"><path d="M6 0 L6 6 L0 6Z" fill="#444"/></svg><div class="a" style="left:51.2px;top:319.0px;width:59.5px;height:1px;background:#444"></div><div class="t " id="t95" style="left:110.36px;top:308.79px;font-size:12px;line-height:12px;color:#333;transform:scaleX(0.8926);">...</div><div class="t " id="t96" style="left:34.66px;top:330.29px;font-size:12px;line-height:12px;color:#444;transform:scaleX(0.9467);">Часть 25.</div><div class="t " id="t97" style="left:34.66px;top:351.29px;font-size:12px;line-height:12px;color:#444;transform:scaleX(0.9467);">Часть 26.</div><svg style="left:19.5px;top:352.5px" width="6" height="6" viewBox="0 0 6 6"><path d="M6 0 L6 6 L0 6Z" fill="#444"/></svg><div class="a" style="left:46px;top:367.0px;width:79px;height:20px;background:#c3d5f0"></div><div class="a" style="left:51.2px;top:381.0px;width:59.5px;height:1px;background:#444"></div><div class="t " id="t98" style="left:110.36px;top:370.79px;font-size:12px;line-height:12px;color:#333;transform:scaleX(0.8926);">...</div><div class="t " id="t99" style="left:34.66px;top:393.59px;font-size:12px;line-height:12px;color:#444;transform:scaleX(0.9467);">Часть 27.</div><svg style="left:19.5px;top:394.8px" width="6" height="6" viewBox="0 0 6 6"><path d="M6 0 L6 6 L0 6Z" fill="#444"/></svg><div class="t " id="t100" style="left:50.46px;top:413.79px;font-size:12px;line-height:12px;color:#444;transform:scaleX(1.0302);">&gt;&gt;&gt; Хуже...</div><div class="t " id="t101" style="left:50.46px;top:435.29px;font-size:12px;line-height:12px;color:#444;transform:scaleX(1.0687);">&gt;&gt;&gt; Золу...</div><div class="t " id="t102" style="left:50.46px;top:455.79px;font-size:12px;line-height:12px;color:#444;transform:scaleX(1.0146);">&gt;&gt;&gt; плава...</div><div class="t " id="t103" style="left:50.46px;top:476.29px;font-size:12px;line-height:12px;color:#444;transform:scaleX(0.9846);">&gt;&gt;&gt; 2005 С...</div><div class="t " id="t104" style="left:50.46px;top:497.29px;font-size:12px;line-height:12px;color:#444;transform:scaleX(1.0551);">&gt;&gt;&gt; Друго...</div><div class="t " id="t105" style="left:50.46px;top:518.79px;font-size:12px;line-height:12px;color:#444;transform:scaleX(1.0146);">&gt;&gt;&gt;  весна...</div><div class="t " id="t106" style="left:50.46px;top:539.29px;font-size:12px;line-height:12px;color:#444;transform:scaleX(0.9852);">&gt;&gt;&gt;  2003...</div><div class="t " id="t107" style="left:50.46px;top:560.79px;font-size:12px;line-height:12px;color:#444;transform:scaleX(0.9852);">&gt;&gt;&gt;  2003...</div><div class="t " id="t108" style="left:50.46px;top:581.29px;font-size:12px;line-height:12px;color:#444;transform:scaleX(1.0146);">&gt;&gt;&gt;  весна...</div><div class="t " id="t109" style="left:50.46px;top:602.79px;font-size:12px;line-height:12px;color:#444;transform:scaleX(0.9983);">&gt;&gt;&gt; 2003 о...</div><div class="t " id="t110" style="left:50.46px;top:623.79px;font-size:12px;line-height:12px;color:#444;transform:scaleX(0.9754);">&gt;&gt;&gt; 2003 ф...</div><div class="t " id="t111" style="left:50.46px;top:644.29px;font-size:12px;line-height:12px;color:#444;transform:scaleX(1.0528);">&gt;&gt;&gt; зима-...</div><div class="t " id="t112" style="left:50.46px;top:665.79px;font-size:12px;line-height:12px;color:#444;transform:scaleX(0.9846);">&gt;&gt;&gt; 2003 С...</div></div><div class="a" style="left:151px;top:157px;width:1752px;height:861px;background:#a6a6a6;overflow:hidden" id="doc"><div class="t " id="t113" style="left:29.70px;top:27.02px;font-size:28.5px;line-height:28.5px;color:#000;transform:scaleX(1.0072);word-spacing:-0.700px;">Марику, за которого я болел, удалось </div><div class="t " id="t114" style="left:534.00px;top:27.02px;font-size:28.5px;line-height:28.5px;color:#000;transform:scaleX(1.0116);word-spacing:-0.700px;">пожениться на желанной </div><div class="t " id="t115" style="left:876.00px;top:27.02px;font-size:28.5px;line-height:28.5px;color:#000;transform:scaleX(0.9924);word-spacing:-0.700px;">героине. Это было типа главного </div><div class="t " id="t116" style="left:1315.00px;top:27.02px;font-size:28.5px;line-height:28.5px;color:#000;transform:scaleX(1.0002);word-spacing:-0.700px;">героя в Коллекционере. Она</div><div class="t " id="t117" style="left:29.70px;top:65.62px;font-size:28.5px;line-height:28.5px;color:#000;transform:scaleX(0.9918);word-spacing:-0.700px;">вообще его <span class="wr">нихрена</span> не хотела. Он </div><div class="t " id="t118" style="left:488.40px;top:65.62px;font-size:28.5px;line-height:28.5px;color:#000;transform:scaleX(0.9802);word-spacing:-0.700px;">начал обрастать усами, носить </div><div class="t " id="t119" style="left:898.40px;top:65.62px;font-size:28.5px;line-height:28.5px;color:#000;transform:scaleX(1.0133);word-spacing:-0.700px;">всё темное, кожаную куртку, тёмные </div><div class="t " id="t120" style="left:1391.70px;top:65.62px;font-size:28.5px;line-height:28.5px;color:#000;transform:scaleX(1.0208);word-spacing:-0.700px;">очки. В принципе так он</div><div class="t " id="t121" style="left:29.70px;top:104.12px;font-size:28.5px;line-height:28.5px;color:#000;transform:scaleX(1.0022);word-spacing:-0.700px;">выглядел как крутой, но это было </div><div class="t " id="t122" style="left:479.40px;top:104.12px;font-size:28.5px;line-height:28.5px;color:#000;transform:scaleX(1.0014);word-spacing:-0.700px;">сублимацией его <span class="wr">мрачняка</span> на </div><div class="t " id="t123" style="left:883.40px;top:104.12px;font-size:28.5px;line-height:28.5px;color:#000;transform:scaleX(0.9998);word-spacing:-0.700px;">душе. Там ещё тот солдатик, которого </div><div class="t " id="t124" style="left:1393.40px;top:104.12px;font-size:28.5px;line-height:28.5px;color:#000;transform:scaleX(1.0028);word-spacing:-0.700px;">его теперь-жена ждала,</div><div class="t " id="t125" style="left:29.70px;top:142.62px;font-size:28.5px;line-height:28.5px;color:#000;transform:scaleX(0.9749);word-spacing:-0.700px;">объявился.</div><div class="t " id="t126" style="left:29.70px;top:219.82px;font-size:28.5px;line-height:28.5px;color:#000;transform:scaleX(1.0008);word-spacing:-0.700px;">Примерно в те дни, потому что это </div><div class="t " id="t127" style="left:495.00px;top:219.82px;font-size:28.5px;line-height:28.5px;color:#000;transform:scaleX(1.0111);word-spacing:-0.700px;">были уже прям холодные дни, </div><div class="t " id="t128" style="left:906.70px;top:219.82px;font-size:28.5px;line-height:28.5px;color:#000;transform:scaleX(0.9831);word-spacing:-0.700px;">но ещё не чёрная тьма с утра, мы с </div><div class="t " id="t129" style="left:1374.40px;top:219.82px;font-size:28.5px;line-height:28.5px;color:#000;transform:scaleX(0.9988);word-spacing:-0.700px;"><span class="wr">Гужиком</span> сначала после</div><div class="t " id="t130" style="left:29.70px;top:258.12px;font-size:28.5px;line-height:28.5px;color:#000;transform:scaleX(0.9993);word-spacing:-0.700px;">уроков, а потом до уроков с утра, </div><div class="t " id="t131" style="left:475.00px;top:258.12px;font-size:28.5px;line-height:28.5px;color:#000;transform:scaleX(0.9876);word-spacing:-0.700px;">ещё два-три раза следили за </div><div class="t " id="t132" style="left:863.40px;top:258.12px;font-size:28.5px;line-height:28.5px;color:#000;transform:scaleX(0.9988);word-spacing:-0.700px;">Катей её путь с бабушкой между </div><div class="t " id="t133" style="left:1300.00px;top:258.12px;font-size:28.5px;line-height:28.5px;color:#000;transform:scaleX(1.0141);word-spacing:-0.700px;">гимназией и домом.  Снова они</div><div class="t " id="t134" style="left:29.70px;top:296.82px;font-size:28.5px;line-height:28.5px;color:#000;transform:scaleX(1.0001);word-spacing:-0.700px;">заходили в магазин, теперь в доме </div><div class="t " id="t135" style="left:498.40px;top:296.82px;font-size:28.5px;line-height:28.5px;color:#000;transform:scaleX(0.9928);word-spacing:-0.700px;">Вольская двадцать один дробь </div><div class="t " id="t136" style="left:915.00px;top:296.82px;font-size:28.5px;line-height:28.5px;color:#000;transform:scaleX(0.9968);word-spacing:-0.700px;">двадцать семь, а когда мы следили </div><div class="t " id="t137" style="left:1390.00px;top:296.82px;font-size:28.5px;line-height:28.5px;color:#000;transform:scaleX(0.9955);word-spacing:-0.700px;">с утра то мы возле него</div><div class="t " id="t138" style="left:29.70px;top:335.62px;font-size:28.5px;line-height:28.5px;color:#000;transform:scaleX(0.9763);word-spacing:-0.700px;">встречались, я там грелся. В общем </div><div class="t " id="t139" style="left:503.40px;top:335.62px;font-size:28.5px;line-height:28.5px;color:#000;transform:scaleX(0.9973);word-spacing:-0.700px;">это была какая-то прям жопа. </div><div class="t " id="t140" style="left:901.70px;top:335.62px;font-size:28.5px;line-height:28.5px;color:#000;transform:scaleX(0.9847);word-spacing:-0.700px;">Бесперспективная отчаянная слежка </div><div class="t " id="t141" style="left:1392.70px;top:335.62px;font-size:28.5px;line-height:28.5px;color:#000;transform:scaleX(1.0000);word-spacing:-0.700px;">морозясь на холоде.</div><div class="t " id="t142" style="left:29.70px;top:374.82px;font-size:28.5px;line-height:28.5px;color:#000;transform:scaleX(0.9888);word-spacing:-0.700px;">Я до сих пор сидел в ряду у окна, </div><div class="t " id="t143" style="left:471.70px;top:374.82px;font-size:28.5px;line-height:28.5px;color:#000;transform:scaleX(0.9962);word-spacing:-0.700px;">Катя в среднем, а <span class="wr">Гужик</span> в третьем </div><div class="t " id="t144" style="left:930.70px;top:374.82px;font-size:28.5px;line-height:28.5px;color:#000;transform:scaleX(1.0080);word-spacing:-0.700px;">крайнем. И в самом конце четверти </div><div class="t " id="t145" style="left:1411.70px;top:374.82px;font-size:28.5px;line-height:28.5px;color:#000;transform:scaleX(1.0055);word-spacing:-0.700px;">на самом последнем</div><div class="t " id="t146" style="left:29.70px;top:413.52px;font-size:28.5px;line-height:28.5px;color:#000;transform:scaleX(1.0070);word-spacing:-0.700px;">уроке перед каникулами, он был с </div><div class="t " id="t147" style="left:491.70px;top:413.52px;font-size:28.5px;line-height:28.5px;color:#000;transform:scaleX(0.9832);word-spacing:-0.700px;">Валентиной Юрьевной и в классе </div><div class="t " id="t148" style="left:938.40px;top:413.52px;font-size:28.5px;line-height:28.5px;color:#000;transform:scaleX(1.0032);word-spacing:-0.700px;">рядом с нашим изначальным, </div><div class="t " id="t149" style="left:1341.70px;top:413.52px;font-size:28.5px;line-height:28.5px;color:#000;transform:scaleX(0.9805);word-spacing:-0.700px;">она начала нас всех</div><div class="t " id="t150" style="left:29.70px;top:451.82px;font-size:28.5px;line-height:28.5px;color:#000;transform:scaleX(0.9883);word-spacing:-0.700px;">пересаживать. Она решала на ходу. </div><div class="t " id="t151" style="left:507.40px;top:451.82px;font-size:28.5px;line-height:28.5px;color:#000;transform:scaleX(0.9974);word-spacing:-0.700px;">Катю она отсадила за крайнюю </div><div class="t " id="t152" style="left:926.70px;top:451.82px;font-size:28.5px;line-height:28.5px;color:#000;transform:scaleX(0.9929);word-spacing:-0.700px;">первую парту к выходу из класса </div><div class="t " id="t153" style="left:1365.00px;top:451.82px;font-size:28.5px;line-height:28.5px;color:#000;transform:scaleX(1.0351);word-spacing:-0.700px;">и пока никого к ней не</div><div class="t " id="t154" style="left:29.70px;top:490.62px;font-size:28.5px;line-height:28.5px;color:#000;transform:scaleX(0.9886);word-spacing:-0.700px;">подсадила. Потом пересаживала </div><div class="t " id="t155" style="left:471.70px;top:490.62px;font-size:28.5px;line-height:28.5px;color:#000;transform:scaleX(1.0033);word-spacing:-0.700px;">других. Потом отправила <span class="wr">Гужвия</span> </div><div class="t " id="t156" style="left:913.40px;top:490.62px;font-size:28.5px;line-height:28.5px;color:#000;transform:scaleX(1.0000);word-spacing:-0.700px;">в мой ряд. Была интрига кто же </div><div class="t " id="t157" style="left:1336.00px;top:490.62px;font-size:28.5px;line-height:28.5px;color:#000;transform:scaleX(1.0042);word-spacing:-0.700px;">станет везунчиком к Кате.</div><div class="t " id="t158" style="left:29.70px;top:529.82px;font-size:28.5px;line-height:28.5px;color:#000;transform:scaleX(0.9947);word-spacing:-0.700px;">Учительница водила по нам пальцем </div><div class="t " id="t159" style="left:526.70px;top:529.82px;font-size:28.5px;line-height:28.5px;color:#000;transform:scaleX(0.9959);word-spacing:-0.700px;">как по шахматам. И тут, </div><div class="t " id="t160" style="left:844.00px;top:529.82px;font-size:28.5px;line-height:28.5px;color:#000;transform:scaleX(1.0069);word-spacing:-0.700px;">остановив взгляд на мне, говорит: «а </div><div class="t " id="t161" style="left:1345.00px;top:529.82px;font-size:28.5px;line-height:28.5px;color:#000;transform:scaleX(0.9774);word-spacing:-0.700px;">ты - давай-ка к Кате».</div><div class="t " id="t162" style="left:29.70px;top:568.52px;font-size:28.5px;line-height:28.5px;color:#000;transform:scaleX(0.9678);word-spacing:-0.700px;">Это был триумф. Я шёл, смотрел на </div><div class="t " id="t163" style="left:501.70px;top:568.52px;font-size:28.5px;line-height:28.5px;color:#000;transform:scaleX(0.9849);word-spacing:-0.700px;"><span class="wr">Гужика</span> остававшегося теперь </div><div class="t " id="t164" style="left:898.40px;top:568.52px;font-size:28.5px;line-height:28.5px;color:#000;transform:scaleX(0.9856);word-spacing:-0.700px;">в самом дальнем от нас углу <span class="wb">класса</span> </div><div class="t " id="t165" style="left:1376.00px;top:568.52px;font-size:28.5px;line-height:28.5px;color:#000;transform:scaleX(0.9994);word-spacing:-0.700px;">и он был реально</div><div class="t " id="t166" style="left:29.70px;top:607.32px;font-size:28.5px;line-height:28.5px;color:#000;transform:scaleX(1.0052);word-spacing:-0.700px;">понурый, что даже было жестоко. </div><div class="t " id="t167" style="left:484.00px;top:607.32px;font-size:28.5px;line-height:28.5px;color:#000;transform:scaleX(0.9924);word-spacing:-0.700px;">Но понурые к концу урока были </div><div class="t " id="t168" style="left:905.00px;top:607.32px;font-size:28.5px;line-height:28.5px;color:#000;transform:scaleX(0.9949);word-spacing:-0.700px;">все трое из нас. Я сидел у самой </div><div class="t " id="t169" style="left:1343.40px;top:607.32px;font-size:28.5px;line-height:28.5px;color:#000;transform:scaleX(1.0033);word-spacing:-0.700px;">двери и весь остаток урока</div><div class="t " id="t170" style="left:29.70px;top:645.62px;font-size:28.5px;line-height:28.5px;color:#000;transform:scaleX(0.9901);word-spacing:-0.700px;">Катя смотрела в другую сторону от </div><div class="t " id="t171" style="left:494.40px;top:645.62px;font-size:28.5px;line-height:28.5px;color:#000;transform:scaleX(1.0140);word-spacing:-0.700px;">меня. А <span class="wb">потом</span> когда мы выходили </div><div class="t " id="t172" style="left:956.70px;top:645.62px;font-size:28.5px;line-height:28.5px;color:#000;transform:scaleX(0.9791);word-spacing:-0.700px;">я слышал она кому-то сказала: </div><div class="t " id="t173" style="left:1366.70px;top:645.62px;font-size:28.5px;line-height:28.5px;color:#000;transform:scaleX(1.0016);word-spacing:-0.700px;">«я его всегда</div><div class="t " id="t174" style="left:29.70px;top:684.32px;font-size:28.5px;line-height:28.5px;color:#000;transform:scaleX(0.9927);word-spacing:-0.700px;">ненавидела».</div><div class="t " id="t175" style="left:29.70px;top:801.62px;font-size:28.5px;line-height:28.5px;color:#000;transform:scaleX(0.9905);word-spacing:-0.700px;">Марк это терпеть не стал и вскрыл </div><div class="t " id="t176" style="left:490.70px;top:801.62px;font-size:28.5px;line-height:28.5px;color:#000;transform:scaleX(0.9912);word-spacing:-0.700px;">себе вены в ванной, там была </div><div class="t " id="t177" style="left:893.40px;top:801.62px;font-size:28.5px;line-height:28.5px;color:#000;transform:scaleX(0.9838);word-spacing:-0.700px;">жёсткая сцена с этим. Через пару </div><div class="t " id="t178" style="left:1338.40px;top:801.62px;font-size:28.5px;line-height:28.5px;color:#000;transform:scaleX(0.9938);word-spacing:-0.700px;">серий сериал кончился.</div><div class="t " id="t179" style="left:29.70px;top:840.32px;font-size:28.5px;line-height:28.5px;color:#000;transform:scaleX(1.0056);word-spacing:-0.700px;">Должно быть в этом году и в это </div><div class="t " id="t180" style="left:463.40px;top:840.32px;font-size:28.5px;line-height:28.5px;color:#000;transform:scaleX(0.9997);word-spacing:-0.700px;">время компьютерный стол у нас </div><div class="t " id="t181" style="left:896.00px;top:840.32px;font-size:28.5px;line-height:28.5px;color:#000;transform:scaleX(1.0010);word-spacing:-0.700px;">стоял в маленькой комнате и отец </div><div class="t " id="t182" style="left:1356.70px;top:840.32px;font-size:28.5px;line-height:28.5px;color:#000;transform:scaleX(0.9910);word-spacing:-0.700px;">принёс диск с фэнтези</div><div class="t " id="t183" style="left:32.00px;top:761.98px;font-size:36px;line-height:36px;color:#000;transform:scaleX(0.9921);">***</div></div><div class="a" style="left:1903px;top:157px;width:17px;height:861px;background:#f3f3f3;border-left:1px solid #fff;border-right:1px solid #fff"></div><div class="a" style="left:1904px;top:159px;width:15px;height:15px;background:#fff;border:1px solid #8e8e8e"></div><svg style="left:1908px;top:164px" width="7" height="4" viewBox="0 0 7 4"><path d="M0 4 L3.5 0 L7 4Z" fill="#222"/></svg><div class="a" style="left:1904px;top:1001px;width:15px;height:15px;background:#fff;border:1px solid #8e8e8e"></div><svg style="left:1908px;top:1007px" width="7" height="4" viewBox="0 0 7 4"><path d="M0 0 L3.5 4 L7 0Z" fill="#222"/></svg><div class="a" style="left:1904px;top:434px;width:15px;height:17px;background:#fff;border:1px solid #ababab"></div><div class="a" style="left:0;top:1018px;width:1920px;height:22px;background:#f3f3f3"></div><div class="t " id="t184" style="left:11.70px;top:1024.02px;font-size:11.5px;line-height:11.5px;color:#444;transform:scaleX(0.9599);">Число слов: 283004</div><svg style="left:131.5px;top:1022px" width="16" height="13" viewBox="0 0 16 13" fill="none" stroke="#6a6a6a" stroke-width="1"><path d="M7.5 1.5 L7.5 11.5 M7.5 1.5 C5.5 0.5 3 0.5 1 1 L1 10.5 C3 10 5.5 10 7.5 11.5 C8.5 10.5 9.5 10.2 10.5 10.2 M7.5 1.5 C8.5 0.8 9.5 0.6 10.5 0.6"/><path d="M10 0.5 H15 V8 H10" /><path d="M10.8 2.3 L14 6.2 M14 2.3 L10.8 6.2" stroke="#444"/></svg><div class="t " id="t185" style="left:163.89px;top:1024.02px;font-size:11.5px;line-height:11.5px;color:#444;transform:scaleX(1.0290);">русский</div><svg style="left:223.5px;top:1022px" width="17" height="14" viewBox="0 0 17 14" fill="none" stroke="#444" stroke-width="1.1"><path d="M5 1.2 A5 5 0 1 0 8.5 10" stroke-dasharray="2.2 1.4"/><path d="M6 0.5 V5.5 H9.5"/><path d="M8.2 6.3 L15.8 13.5 M15.8 6.3 L8.2 13.5" stroke-width="1.5"/></svg><div class="t " id="t186" style="left:242.50px;top:1024.02px;font-size:11.5px;line-height:11.5px;color:#303030;font-weight:700;transform:scaleX(0.9673);">Специальные возможности: проверьте рекомендации</div><div class="a" style="left:1700px;top:1018px;width:40px;height:22px;background:#c8c8c8"></div><svg style="left:1633px;top:1022px" width="14" height="13" viewBox="0 0 14 13" fill="none" stroke="#5a5a5a" stroke-width="1"><path d="M6.5 1.5 V12.5 M6.5 1.5 C5 0.5 2.5 0.5 0.5 0.5 V10.5 C2.5 10.5 5 10.5 6.5 11.5 C8 10.5 10.5 10.5 12.5 10.5 V0.5 C10.5 0.5 8 0.5 6.5 1.5"/><path d="M2 2.5 H5 M2 4.5 H5 M2 6.5 H5 M2 8.5 H5 M8 2.5 H11 M8 4.5 H11 M8 6.5 H11 M8 8.5 H11" stroke="#7a7a7a"/></svg><svg style="left:1673px;top:1022px" width="15" height="13" viewBox="0 0 15 13" fill="none" stroke="#5a5a5a" stroke-width="1"><rect x="0.5" y="0.5" width="14" height="12"/><path d="M2 2.5 H13 M2 4.5 H13 M2 6.5 H13 M2 8.5 H13 M2 10.5 H13" stroke="#6a6a6a"/></svg><svg style="left:1713px;top:1022px" width="15" height="13" viewBox="0 0 15 13" fill="none" stroke="#5a5a5a" stroke-width="1"><path d="M7 10.5 H0.5 V0.5 H11.5 V5"/><path d="M2 2.5 H10 M2 4.5 H10 M2 6.5 H6" stroke="#6a6a6a"/><circle cx="10.5" cy="9.5" r="3.2" fill="#9a9a9a" stroke="#5a5a5a"/><path d="M8 8.5 Q10.5 10.5 13 8.5 M10.5 6.5 V12.5" stroke="#d0d0d0" stroke-width="0.7"/></svg><div class="a" style="left:1746.3px;top:1028.3px;width:7px;height:1px;background:#444"></div><div class="a" style="left:1759px;top:1028.7px;width:100px;height:1px;background:#5a5a5a"></div><div class="a" style="left:1809px;top:1026.5px;width:1px;height:6px;background:#5a5a5a"></div><div class="a" style="left:1820px;top:1023.5px;width:5px;height:11.5px;background:#444"></div><div class="a" style="left:1864px;top:1028.3px;width:8px;height:1px;background:#444"></div><div class="a" style="left:1867.5px;top:1024.8px;width:1px;height:8px;background:#444"></div><div class="t " id="t187" style="left:1884.49px;top:1024.22px;font-size:11.5px;line-height:11.5px;color:#444;transform:scaleX(0.9306);">210%</div><div class="a" style="left:0;top:1040px;width:1920px;height:40px;background:linear-gradient(90deg,#b2bcc4 0px,#b5b5be 45px,#bfabb2 82px,#bfaab1 125px,#b5b1b9 160px,#aab7bf 205px,#a9b7be 350px,#b0b2b8 400px,#b5aeb4 460px,#b1b1b8 520px,#abb6bd 570px,#adb5bc 640px,#b9aaaf 700px,#bba9ae 900px,#b3aeb4 1000px,#aab7bd 1130px,#acb8be 1330px,#b2aeb5 1400px,#b9a6ad 1450px,#baa6ad 1690px,#b0b1ba 1760px,#a8bac5 1820px,#a6bbc6 1920px)"></div><svg style="left:13.7px;top:1049.5px" width="21" height="21" viewBox="0 0 21 21"><path d="M0 3 L8.6 1.8 V10 H0Z M9.6 1.65 L21 0 V10 H9.6Z M0 11 H8.6 V19.2 L0 18Z M9.6 11 H21 V21 L9.6 19.35Z" fill="#000"/></svg><div class="a" style="left:690.8px;top:1040px;width:46.2px;height:40px;background:rgba(255,255,255,0.16);border:1px solid rgba(255,255,255,0.30)"></div><div class="a" style="left:739.5px;top:1040px;width:46.3px;height:40px;background:rgba(255,255,255,0.16);border:1px solid rgba(255,255,255,0.30)"></div><div class="a" style="left:788.8px;top:1040px;width:46.2px;height:40px;background:rgba(255,255,255,0.16);border:1px solid rgba(255,255,255,0.30)"></div><div class="a" style="left:935.8px;top:1040px;width:46.2px;height:40px;background:rgba(255,255,255,0.16);border:1px solid rgba(255,255,255,0.30)"></div><div class="a" style="left:984.5px;top:1040px;width:38.8px;height:40px;background:rgba(255,255,255,0.16);border:1px solid rgba(255,255,255,0.30)"></div><div class="a" style="left:1033.8px;top:1040px;width:46.2px;height:40px;background:rgba(255,255,255,0.16);border:1px solid rgba(255,255,255,0.30)"></div><div class="a" style="left:1082.5px;top:1040px;width:46.8px;height:40px;background:rgba(255,255,255,0.16);border:1px solid rgba(255,255,255,0.30)"></div><div class="a" style="left:1180.8px;top:1040px;width:41.2px;height:40px;background:rgba(255,255,255,0.38);border:1px solid rgba(255,255,255,0.75)"></div><div class="a" style="left:1229.5px;top:1040px;width:46.8px;height:40px;background:rgba(255,255,255,0.16);border:1px solid rgba(255,255,255,0.30)"></div><div class="a" style="left:1278.0px;top:1040px;width:47.0px;height:40px;background:rgba(255,255,255,0.16);border:1px solid rgba(255,255,255,0.30)"></div><div class="a" style="left:1327.5px;top:1040px;width:46.8px;height:40px;background:rgba(255,255,255,0.16);border:1px solid rgba(255,255,255,0.30)"></div><div class="a" style="left:878.0px;top:1040px;width:2.5px;height:40px;background:rgba(255,255,255,0.22);border-left:1px solid rgba(255,255,255,0.35);border-right:1px solid rgba(120,120,120,0.35)"></div><div class="a" style="left:881.5px;top:1040px;width:2.5px;height:40px;background:rgba(255,255,255,0.22);border-left:1px solid rgba(255,255,255,0.35);border-right:1px solid rgba(120,120,120,0.35)"></div><div class="a" style="left:1025.0px;top:1040px;width:2.5px;height:40px;background:rgba(255,255,255,0.22);border-left:1px solid rgba(255,255,255,0.35);border-right:1px solid rgba(120,120,120,0.35)"></div><div class="a" style="left:1028.5px;top:1040px;width:2.5px;height:40px;background:rgba(255,255,255,0.22);border-left:1px solid rgba(255,255,255,0.35);border-right:1px solid rgba(120,120,120,0.35)"></div><div class="a" style="left:1224.0px;top:1040px;width:3.5px;height:40px;background:rgba(255,255,255,0.22);border-left:1px solid rgba(255,255,255,0.35);border-right:1px solid rgba(120,120,120,0.35)"></div><div class="a" style="left:837.5px;top:1040px;width:38.5px;height:40px;background:linear-gradient(180deg,#f3c53d 0%,#f2b136 45%,#f09a30 100%);border:1px solid #f6d878"></div><svg style="left:555px;top:1048px" width="24" height="22" viewBox="0 0 24 22"><path d="M9 1 L1 17 H14 Z" fill="#e8f2fa" stroke="#2c8fd6" stroke-width="2.2" stroke-linejoin="round"/><path d="M15 8 L8 21 H23 Z" fill="#fdf3c0" stroke="#f0b400" stroke-width="2.2" stroke-linejoin="round"/></svg><svg style="left:605px;top:1048.5px" width="23" height="22" viewBox="0 0 23 22"><circle cx="11.5" cy="11" r="10.8" fill="#2a2f45"/><circle cx="11.5" cy="11" r="10" fill="none" stroke="#55608a" stroke-width="1"/><rect x="4.5" y="7" width="14" height="8" rx="1" fill="#0d1020" stroke="#8088a8" stroke-width="0.8"/><path d="M8 9.5 L11 11 L15 9.5" stroke="#b6bcd6" stroke-width="1" fill="none"/></svg><div class="a" style="left:655px;top:1049px;width:20px;height:19px;background:#001d26;border:1.5px solid #00c8ff"></div><div class="t " id="t188" style="left:657.76px;top:1054.29px;font-size:12px;line-height:12px;color:#31c5f0;font-weight:700;transform:scaleX(0.9491);">Ps</div><svg style="left:703px;top:1049.5px" width="26" height="25" viewBox="0 0 26 25"><circle cx="10.8" cy="10.3" r="10.3" fill="#2fa3dc"/><path d="M4.2 10.2 L16.2 5.2 L14.2 15.6 L10.4 12.8 L8.8 14.8 L8.5 11.9 Z" fill="#fff"/><rect x="9.2" y="13.4" width="16" height="10.6" rx="2.2" fill="#e8453c"/></svg><div class="t " id="t189" style="left:713.94px;top:1065.88px;font-size:8px;line-height:8px;color:#fff;font-weight:700;transform:scaleX(1.0301);">.77</div><svg style="left:751px;top:1049px" width="23" height="23" viewBox="0 0 23 23"><ellipse cx="11.5" cy="11.5" rx="11" ry="11.2" fill="#e0202c"/><ellipse cx="11.5" cy="11.5" rx="4" ry="7.8" fill="#c4b0b5"/></svg><svg style="left:799.5px;top:1048.5px" width="24" height="24" viewBox="0 0 24 24"><circle cx="12" cy="12" r="11.8" fill="#e34133"/><path d="M12 12 L1.8 6.1 A11.8 11.8 0 0 0 12.2 23.8 L17.6 14.6Z" fill="#2da94f"/><path d="M12 12 L12.2 23.8 A11.8 11.8 0 0 0 22.2 6.1 H12Z" fill="#fbc116"/><path d="M1.8 6.1 A11.8 11.8 0 0 1 22.2 6.1 H12Z" fill="#e34133"/><circle cx="12" cy="12" r="5.4" fill="#fff"/><circle cx="12" cy="12" r="4.3" fill="#3f86f1"/></svg><svg style="left:844.5px;top:1048.5px" width="25" height="25" viewBox="0 0 25 25"><circle cx="12.2" cy="12.2" r="12" fill="#fff"/><path d="M6.5 5.5 L12.2 12.2 L18 5.5 M12.2 12.2 V20.5" stroke="#f7323f" stroke-width="2.6" fill="none" stroke-linecap="round"/></svg><svg style="left:897.5px;top:1048.5px" width="25" height="25" viewBox="0 0 25 25"><circle cx="12.3" cy="12.3" r="10.6" fill="none" stroke="#f08a3c" stroke-width="2.6"/><circle cx="12.5" cy="12.5" r="2.3" fill="#f08a3c"/><path d="M12.5 12.5 L17.5 6" stroke="#f08a3c" stroke-width="2"/></svg><svg style="left:947px;top:1049px" width="24" height="23" viewBox="0 0 24 23"><path d="M7 2 L21 0.5 L18 20 L3 18 Z" fill="#bfe3ee" stroke="#8fb4c0" stroke-width="0.8"/><path d="M7 2 L21 0.5 L20.3 4 L6.3 5.5Z" fill="#8ecfdf"/><path d="M18 20 L21 0.5 L23 3 L20 22Z" fill="#e9e2cf"/><path d="M3 18 L18 20 L20 22 L5 20.5Z" fill="#9aa7ad"/></svg><svg style="left:992.5px;top:1050px" width="24" height="20" viewBox="0 0 24 20"><path d="M0 2 Q0 0.5 1.5 0.5 H8 L10 3 H22.5 Q24 3 24 4.5 V18 Q24 19.5 22.5 19.5 H1.5 Q0 19.5 0 18Z" fill="#f5b92e"/><path d="M0 6 H24 V18 Q24 19.5 22.5 19.5 H1.5 Q0 19.5 0 18Z" fill="#fbd65e"/><path d="M8 19.5 V12 H16 V19.5 H13.7 V14.5 H10.3 V19.5Z" fill="#3a8ee0"/></svg><svg style="left:1045px;top:1049px" width="25" height="24" viewBox="0 0 25 24"><path d="M11 5 C4 5 0.5 9.5 0.5 13.5 C0.5 18.5 5 21.5 10 21.5 C13 21.5 13.5 19.5 12.5 18 C11.5 16.3 12.5 15 15 15 C19 15 21.5 13 21.5 10.5 C21.5 7 17 5 11 5Z" fill="#e9eef5" stroke="#7e94b5" stroke-width="1"/><circle cx="5.5" cy="11" r="1.7" fill="#e04a3a"/><circle cx="9.5" cy="8.5" r="1.7" fill="#3aa655"/><circle cx="14.5" cy="8.7" r="1.7" fill="#3b7fd9"/><circle cx="5.3" cy="15.8" r="1.7" fill="#f3b62b"/><path d="M22.5 0.5 L24 2 L14 19 L12 20 L12.5 17.5Z" fill="#d98a3a" stroke="#a8672a" stroke-width="0.5"/></svg><svg style="left:1094px;top:1049px" width="24" height="24" viewBox="0 0 24 24"><rect x="5" y="0.5" width="18" height="20" fill="#cfe6f5" stroke="#8fb7d4" stroke-width="0.8"/><rect x="3" y="2" width="18" height="20" fill="#ddeefa" stroke="#8fb7d4" stroke-width="0.8"/><rect x="0.8" y="3.5" width="18" height="20" fill="#e9f4fc" stroke="#8fb7d4" stroke-width="0.8"/><circle cx="10" cy="13" r="7.6" fill="#f27a1a"/><path d="M7.6 8.8 L14.6 13 L7.6 17.2Z" fill="#fff"/></svg><svg style="left:1142.5px;top:1048.5px" width="25" height="25" viewBox="0 0 25 25"><circle cx="12.5" cy="12.5" r="12.2" fill="#1b74c9"/><path d="M2 8 A12.2 12.2 0 0 1 24.6 11 C24.8 15 22 16.5 18.5 16.5 H11 C11 13 13 11 15.5 10.5 C12 7.5 5 8 2 8Z" fill="#35c1a1"/><path d="M12.5 0.3 A12.2 12.2 0 0 1 24.6 11 C24.8 15 22 16.5 18.5 16.5 C20 13 17 9 12.5 9 C8 9 4 11.5 1.2 15 A12.2 12.2 0 0 1 12.5 0.3Z" fill="#3ac06c" opacity="0.55"/><path d="M10.5 14 C10.5 18.5 14.5 22 20.5 20.5 A12.2 12.2 0 0 1 0.5 14 C2.5 10.5 6.5 8.7 10 9.2 C13 9.6 15 11 15.5 12 C13 11.5 10.5 12 10.5 14Z" fill="#1560b8"/><path d="M11 15.5 C11.5 18 14 19.8 17 19.8 C19 19.8 21 19 22.5 17.8 C20 22 16 23 13 21.5 C10.5 20.3 9.8 17.5 11 15.5Z" fill="#b7aab0" opacity="0.95"/></svg><svg style="left:1188.5px;top:1049px" width="25" height="23" viewBox="0 0 25 23"><rect x="6" y="0" width="19" height="23" rx="1.2" fill="#2b7cd3"/><rect x="6" y="0" width="19" height="5.8" fill="#41a5ee"/><rect x="6" y="11.5" width="19" height="5.8" fill="#185abd"/><rect x="6" y="17.2" width="19" height="5.8" rx="1.2" fill="#103f91"/><rect x="0" y="4.5" width="14" height="14" rx="1.2" fill="#185abd"/></svg><div class="t " id="t190" style="left:1190.27px;top:1056.76px;font-size:10.5px;line-height:10.5px;color:#fff;font-weight:700;transform:scaleX(1.0845);">W</div><svg style="left:1240.5px;top:1048.5px" width="24.0" height="24.0" viewBox="0 0 24 24"><circle cx="12" cy="12.5" r="10.3" fill="#f6b61e"/><circle cx="12" cy="11" r="8.5" fill="#fbd33e"/><path d="M2.5 12 A9.8 9.8 0 0 1 21.5 12" fill="none" stroke="#3a3f45" stroke-width="1.6"/><rect x="0.3" y="9.5" width="4.2" height="6.5" rx="2" fill="#1f8a8a"/><rect x="19.5" y="9.5" width="4.2" height="6.5" rx="2" fill="#3a3f45"/><ellipse cx="8.8" cy="9.6" rx="1.5" ry="2.1" fill="#fff"/><ellipse cx="15.2" cy="9.6" rx="1.5" ry="2.1" fill="#fff"/><circle cx="9" cy="10" r="0.9" fill="#222"/><circle cx="15" cy="10" r="0.9" fill="#222"/><path d="M6.5 14 Q12 21.5 17.5 14 Q12 16 6.5 14Z" fill="#b3321e"/></svg><svg style="left:1290.5px;top:1049px" width="25" height="24" viewBox="0 0 25 24"><rect x="3" y="0.5" width="21" height="15" fill="#4fb4ea" stroke="#2d8ecb" stroke-width="1"/><circle cx="6" cy="13" r="4.6" fill="#cfe2ee" fill-opacity="0.8" stroke="#9aa8b3" stroke-width="1.2"/><path d="M9.3 16.3 L14 22" stroke="#8a8f96" stroke-width="1.6"/></svg><svg style="left:1338.5px;top:1048.5px" width="25" height="25" viewBox="0 0 25 25"><circle cx="12.5" cy="12.5" r="12.2" fill="#7b57c4"/><circle cx="12.5" cy="12.5" r="11" fill="none" stroke="#a58ce0" stroke-width="1"/><path d="M17.5 6.5 A7.5 7.5 0 1 0 17.5 19" fill="none" stroke="#fff" stroke-width="1.8"/><path d="M17 9.5 A4.6 4.6 0 1 0 17 16.5" fill="none" stroke="#fff" stroke-width="1.8"/><path d="M16 12.2 A1.8 1.8 0 1 0 16 14.5" fill="none" stroke="#fff" stroke-width="1.6"/></svg><svg style="left:1670.5px;top:1056px" width="13" height="8" viewBox="0 0 13 8"><path d="M0.7 7 L6.4 1 L12.1 7" fill="none" stroke="#000" stroke-width="1.4"/></svg><svg style="left:1693.0px;top:1053.5px" width="16.0" height="16.0" viewBox="0 0 24 24"><circle cx="12" cy="12.5" r="10.3" fill="#f6b61e"/><circle cx="12" cy="11" r="8.5" fill="#fbd33e"/><path d="M2.5 12 A9.8 9.8 0 0 1 21.5 12" fill="none" stroke="#3a3f45" stroke-width="1.6"/><rect x="0.3" y="9.5" width="4.2" height="6.5" rx="2" fill="#1f8a8a"/><rect x="19.5" y="9.5" width="4.2" height="6.5" rx="2" fill="#3a3f45"/><ellipse cx="8.8" cy="9.6" rx="1.5" ry="2.1" fill="#fff"/><ellipse cx="15.2" cy="9.6" rx="1.5" ry="2.1" fill="#fff"/><circle cx="9" cy="10" r="0.9" fill="#222"/><circle cx="15" cy="10" r="0.9" fill="#222"/><path d="M6.5 14 Q12 21.5 17.5 14 Q12 16 6.5 14Z" fill="#b3321e"/></svg><svg style="left:1719.5px;top:1054.5px" width="14" height="13" viewBox="0 0 14 13" fill="none" stroke="#222" stroke-width="1.1"><path d="M0.8 12 A11.5 11.5 0 0 1 12.3 0.8"/><path d="M3.8 12 A8.5 8.5 0 0 1 12.3 3.8"/><path d="M6.8 12 A5.5 5.5 0 0 1 12.3 6.8"/><circle cx="11.3" cy="11" r="1.4" fill="#111" stroke="none"/></svg><svg style="left:1740.5px;top:1053px" width="17" height="14" viewBox="0 0 17 14" fill="none" stroke="#111" stroke-width="1.1"><path d="M0.6 4.8 H3.2 L6.8 1.2 V12.8 L3.2 9.2 H0.6Z"/><path d="M9 4.8 Q10.4 7 9 9.2"/><path d="M11.3 3 Q13.7 7 11.3 11"/><path d="M13.7 1.2 Q17 7 13.7 12.8"/></svg><div class="t " id="t191" style="left:1767.89px;top:1054.52px;font-size:11.5px;line-height:11.5px;color:#111;transform:scaleX(0.9717);">РУС</div><div class="t " id="t192" style="left:1804.99px;top:1044.92px;font-size:11.5px;line-height:11.5px;color:#111;transform:scaleX(0.9939);">10:11 PM</div><div class="t " id="t193" style="left:1805.49px;top:1062.92px;font-size:11.5px;line-height:11.5px;color:#111;transform:scaleX(1.0450);">3/3/2025</div><svg style="left:1873px;top:1052.5px" width="26" height="23" viewBox="0 0 26 23"><path d="M0 0 H16 V11.5 H3.5 L0 14.5Z" fill="#000"/><path d="M2.5 3 H13.5 M2.5 5.7 H13.5 M2.5 8.4 H13.5" stroke="#c9c9cf" stroke-width="0.9"/><ellipse cx="15.6" cy="15" rx="9.8" ry="7.5" fill="#b9bdc6" fill-opacity="0.85" stroke="#8f959e" stroke-width="0.8"/></svg><div class="t " id="t194" style="left:1881.49px;top:1062.02px;font-size:11.5px;line-height:11.5px;color:#111;transform:scaleX(1.1237);">20</div><svg style="left:0;top:0" width="1920" height="1080"><path d="M336.6 251.0 L338.6 253.3 L340.6 251.0 L342.6 253.3 L344.6 251.0 L346.6 253.3 L348.6 251.0 L350.6 253.3 L352.6 251.0 L354.6 253.3 L356.6 251.0 L358.6 253.3 L360.6 251.0 L362.6 253.3 L364.6 251.0 L366.6 253.3 L368.6 251.0 L370.6 253.3 L372.6 251.0 L374.6 253.3 L376.6 251.0 L378.6 253.3 L380.6 251.0 L382.6 253.3 L384.6 251.0 L386.6 253.3 L388.6 251.0 L390.6 253.3 L392.6 251.0 L394.6 253.3 L396.6 251.0 L398.6 253.3 L400.6 251.0 L402.6 253.3 L404.6 251.0 L406.6 253.3 L408.6 251.0 L410.6 253.3 L412.6 251.0 L414.6 253.3 L416.6 251.0 L418.6 253.3 L420.6 251.0 L422.6 253.3 L424.6 251.0 L426.6 253.3 L428.6 251.0 L430.6 253.3 L432.6 251.0 L434.6 253.3 L436.6 251.0 L438.6 253.3 L440.6 251.0 L442.6 253.3 L444.6 251.0 L446.6 253.3" fill="none" stroke="#c00000" stroke-width="1.1" stroke-linejoin="round"/></svg><svg style="left:0;top:0" width="1920" height="1080"><path d="M862.0 289.5 L864.0 291.8 L866.0 289.5 L868.0 291.8 L870.0 289.5 L872.0 291.8 L874.0 289.5 L876.0 291.8 L878.0 289.5 L880.0 291.8 L882.0 289.5 L884.0 291.8 L886.0 289.5 L888.0 291.8 L890.0 289.5 L892.0 291.8 L894.0 289.5 L896.0 291.8 L898.0 289.5 L900.0 291.8 L902.0 289.5 L904.0 291.8 L906.0 289.5 L908.0 291.8 L910.0 289.5 L912.0 291.8 L914.0 289.5 L916.0 291.8 L918.0 289.5 L920.0 291.8 L922.0 289.5 L924.0 291.8 L926.0 289.5 L928.0 291.8 L930.0 289.5 L932.0 291.8 L934.0 289.5 L936.0 291.8 L938.0 289.5 L940.0 291.8 L942.0 289.5 L944.0 291.8 L946.0 289.5 L948.0 291.8 L950.0 289.5 L952.0 291.8 L954.0 289.5 L956.0 291.8 L958.0 289.5 L960.0 291.8 L962.0 289.5 L964.0 291.8 L966.0 289.5 L968.0 291.8 L970.0 289.5 L972.0 291.8 L974.0 289.5 L976.0 291.8 L978.0 289.5 L980.0 291.8 L982.0 289.5 L984.0 291.8 L986.0 289.5 L988.0 291.8" fill="none" stroke="#c00000" stroke-width="1.1" stroke-linejoin="round"/></svg><svg style="left:0;top:0" width="1920" height="1080"><path d="M1524.9 405.2 L1526.9 407.5 L1528.9 405.2 L1530.9 407.5 L1532.9 405.2 L1534.9 407.5 L1536.9 405.2 L1538.9 407.5 L1540.9 405.2 L1542.9 407.5 L1544.9 405.2 L1546.9 407.5 L1548.9 405.2 L1550.9 407.5 L1552.9 405.2 L1554.9 407.5 L1556.9 405.2 L1558.9 407.5 L1560.9 405.2 L1562.9 407.5 L1564.9 405.2 L1566.9 407.5 L1568.9 405.2 L1570.9 407.5 L1572.9 405.2 L1574.9 407.5 L1576.9 405.2 L1578.9 407.5 L1580.9 405.2 L1582.9 407.5 L1584.9 405.2 L1586.9 407.5 L1588.9 405.2 L1590.9 407.5 L1592.9 405.2 L1594.9 407.5 L1596.9 405.2 L1598.9 407.5 L1600.9 405.2 L1602.9 407.5 L1604.9 405.2 L1606.9 407.5 L1608.9 405.2 L1610.9 407.5 L1612.9 405.2 L1614.9 407.5 L1616.9 405.2 L1618.9 407.5 L1620.9 405.2 L1622.9 407.5 L1624.9 405.2 L1626.9 407.5 L1628.9 405.2 L1630.9 407.5 L1632.9 405.2 L1634.9 407.5 L1636.9 405.2" fill="none" stroke="#c00000" stroke-width="1.1" stroke-linejoin="round"/></svg><svg style="left:0;top:0" width="1920" height="1080"><path d="M862.5 560.2 L864.5 562.5 L866.5 560.2 L868.5 562.5 L870.5 560.2 L872.5 562.5 L874.5 560.2 L876.5 562.5 L878.5 560.2 L880.5 562.5 L882.5 560.2 L884.5 562.5 L886.5 560.2 L888.5 562.5 L890.5 560.2 L892.5 562.5 L894.5 560.2 L896.5 562.5 L898.5 560.2 L900.5 562.5 L902.5 560.2 L904.5 562.5 L906.5 560.2 L908.5 562.5 L910.5 560.2 L912.5 562.5 L914.5 560.2 L916.5 562.5 L918.5 560.2 L920.5 562.5 L922.5 560.2 L924.5 562.5 L926.5 560.2 L928.5 562.5 L930.5 560.2 L932.5 562.5 L934.5 560.2 L936.5 562.5 L938.5 560.2" fill="none" stroke="#c00000" stroke-width="1.1" stroke-linejoin="round"/></svg><svg style="left:0;top:0" width="1920" height="1080"><path d="M962.7 676.0 L964.7 678.3 L966.7 676.0 L968.7 678.3 L970.7 676.0 L972.7 678.3 L974.7 676.0 L976.7 678.3 L978.7 676.0 L980.7 678.3 L982.7 676.0 L984.7 678.3 L986.7 676.0 L988.7 678.3 L990.7 676.0 L992.7 678.3 L994.7 676.0 L996.7 678.3 L998.7 676.0 L1000.7 678.3 L1002.7 676.0 L1004.7 678.3 L1006.7 676.0 L1008.7 678.3 L1010.7 676.0 L1012.7 678.3 L1014.7 676.0 L1016.7 678.3 L1018.7 676.0 L1020.7 678.3 L1022.7 676.0 L1024.7 678.3 L1026.7 676.0 L1028.7 678.3 L1030.7 676.0 L1032.7 678.3 L1034.7 676.0 L1036.7 678.3 L1038.7 676.0 L1040.7 678.3 L1042.7 676.0 L1044.7 678.3 L1046.7 676.0 L1048.7 678.3 L1050.7 676.0 L1052.7 678.3 L1054.7 676.0 L1056.7 678.3" fill="none" stroke="#c00000" stroke-width="1.1" stroke-linejoin="round"/></svg><svg style="left:0;top:0" width="1920" height="1080"><path d="M652.2 753.9 L654.2 756.2 L656.2 753.9 L658.2 756.2 L660.2 753.9 L662.2 756.2 L664.2 753.9 L666.2 756.2 L668.2 753.9 L670.2 756.2 L672.2 753.9 L674.2 756.2 L676.2 753.9 L678.2 756.2 L680.2 753.9 L682.2 756.2 L684.2 753.9 L686.2 756.2 L688.2 753.9 L690.2 756.2 L692.2 753.9 L694.2 756.2 L696.2 753.9 L698.2 756.2 L700.2 753.9 L702.2 756.2 L704.2 753.9 L706.2 756.2 L708.2 753.9 L710.2 756.2 L712.2 753.9 L714.2 756.2 L716.2 753.9 L718.2 756.2 L720.2 753.9 L722.2 756.2 L724.2 753.9 L726.2 756.2 L728.2 753.9 L730.2 756.2 L732.2 753.9 L734.2 756.2 L736.2 753.9 L738.2 756.2 L740.2 753.9 L742.2 756.2 L744.2 753.9" fill="none" stroke="#c00000" stroke-width="1.1" stroke-linejoin="round"/></svg><svg style="left:0;top:0" width="1920" height="1080"><path d="M1431.1 753.9 L1433.1 756.2 L1435.1 753.9 L1437.1 756.2 L1439.1 753.9 L1441.1 756.2 L1443.1 753.9 L1445.1 756.2 L1447.1 753.9 L1449.1 756.2 L1451.1 753.9 L1453.1 756.2 L1455.1 753.9 L1457.1 756.2 L1459.1 753.9 L1461.1 756.2 L1463.1 753.9 L1465.1 756.2 L1467.1 753.9 L1469.1 756.2 L1471.1 753.9 L1473.1 756.2 L1475.1 753.9 L1477.1 756.2 L1479.1 753.9 L1481.1 756.2 L1483.1 753.9 L1485.1 756.2 L1487.1 753.9 L1489.1 756.2 L1491.1 753.9 L1493.1 756.2 L1495.1 753.9 L1497.1 756.2 L1499.1 753.9 L1501.1 756.2 L1503.1 753.9 L1505.1 756.2 L1507.1 753.9 L1509.1 756.2 L1511.1 753.9 L1513.1 756.2 L1515.1 753.9 L1517.1 756.2 L1519.1 753.9 L1521.1 756.2" fill="none" stroke="#0a32b4" stroke-width="1.1" stroke-linejoin="round"/></svg><svg style="left:0;top:0" width="1920" height="1080"><path d="M754.4 831.0 L756.4 833.3 L758.4 831.0 L760.4 833.3 L762.4 831.0 L764.4 833.3 L766.4 831.0 L768.4 833.3 L770.4 831.0 L772.4 833.3 L774.4 831.0 L776.4 833.3 L778.4 831.0 L780.4 833.3 L782.4 831.0 L784.4 833.3 L786.4 831.0 L788.4 833.3 L790.4 831.0 L792.4 833.3 L794.4 831.0 L796.4 833.3 L798.4 831.0 L800.4 833.3 L802.4 831.0 L804.4 833.3 L806.4 831.0 L808.4 833.3 L810.4 831.0 L812.4 833.3 L814.4 831.0 L816.4 833.3 L818.4 831.0 L820.4 833.3 L822.4 831.0 L824.4 833.3 L826.4 831.0 L828.4 833.3 L830.4 831.0 L832.4 833.3 L834.4 831.0" fill="none" stroke="#0a32b4" stroke-width="1.1" stroke-linejoin="round"/></svg></body></html>
